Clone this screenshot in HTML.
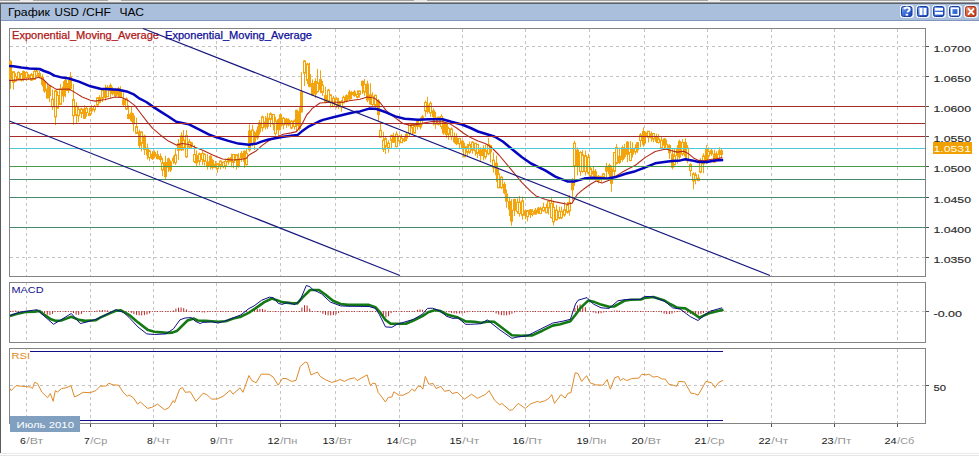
<!DOCTYPE html>
<html><head><meta charset="utf-8"><style>
html,body{margin:0;padding:0;background:#fff;width:979px;height:456px;overflow:hidden}
svg{display:block}
</style></head><body>
<svg width="979" height="456" viewBox="0 0 979 456">
<rect x="0" y="0" width="979" height="1" fill="#a4a4a4"/>
<rect x="20" y="0" width="13" height="1" fill="#e6e6e6"/>
<rect x="108" y="0" width="13" height="1" fill="#e6e6e6"/>
<rect x="414" y="0" width="13" height="1" fill="#e6e6e6"/>
<rect x="708" y="0" width="12" height="1" fill="#e6e6e6"/>
<rect x="975" y="0" width="4" height="1" fill="#e6e6e6"/>
<rect x="0" y="1" width="979" height="1" fill="#f2f2f2"/>
<rect x="0" y="2" width="979" height="1" fill="#9a9a9a"/>
<rect x="0" y="3" width="979" height="1" fill="#5a6270"/>
<rect x="0" y="4" width="979" height="16" fill="#a9bfdb"/>
<rect x="0" y="20" width="979" height="1" fill="#8096bd"/>
<rect x="0" y="3" width="1" height="451" fill="#5c5c5c"/>
<rect x="0" y="453" width="979" height="1" fill="#e9e9e9"/>
<rect x="0" y="455" width="979" height="1" fill="#e6e6e6"/>
<line x1="26.5" y1="29" x2="26.5" y2="276" stroke="#c4c4c4" stroke-width="1" stroke-dasharray="3,3"/>
<line x1="26.5" y1="283" x2="26.5" y2="342" stroke="#c4c4c4" stroke-width="1" stroke-dasharray="3,3"/>
<line x1="26.5" y1="349" x2="26.5" y2="423" stroke="#c4c4c4" stroke-width="1" stroke-dasharray="3,3"/>
<line x1="90.5" y1="29" x2="90.5" y2="276" stroke="#c4c4c4" stroke-width="1" stroke-dasharray="3,3"/>
<line x1="90.5" y1="283" x2="90.5" y2="342" stroke="#c4c4c4" stroke-width="1" stroke-dasharray="3,3"/>
<line x1="90.5" y1="349" x2="90.5" y2="423" stroke="#c4c4c4" stroke-width="1" stroke-dasharray="3,3"/>
<line x1="153.5" y1="29" x2="153.5" y2="276" stroke="#c4c4c4" stroke-width="1" stroke-dasharray="3,3"/>
<line x1="153.5" y1="283" x2="153.5" y2="342" stroke="#c4c4c4" stroke-width="1" stroke-dasharray="3,3"/>
<line x1="153.5" y1="349" x2="153.5" y2="423" stroke="#c4c4c4" stroke-width="1" stroke-dasharray="3,3"/>
<line x1="216.5" y1="29" x2="216.5" y2="276" stroke="#c4c4c4" stroke-width="1" stroke-dasharray="3,3"/>
<line x1="216.5" y1="283" x2="216.5" y2="342" stroke="#c4c4c4" stroke-width="1" stroke-dasharray="3,3"/>
<line x1="216.5" y1="349" x2="216.5" y2="423" stroke="#c4c4c4" stroke-width="1" stroke-dasharray="3,3"/>
<line x1="280.5" y1="29" x2="280.5" y2="276" stroke="#c4c4c4" stroke-width="1" stroke-dasharray="3,3"/>
<line x1="280.5" y1="283" x2="280.5" y2="342" stroke="#c4c4c4" stroke-width="1" stroke-dasharray="3,3"/>
<line x1="280.5" y1="349" x2="280.5" y2="423" stroke="#c4c4c4" stroke-width="1" stroke-dasharray="3,3"/>
<line x1="335.5" y1="29" x2="335.5" y2="276" stroke="#c4c4c4" stroke-width="1" stroke-dasharray="3,3"/>
<line x1="335.5" y1="283" x2="335.5" y2="342" stroke="#c4c4c4" stroke-width="1" stroke-dasharray="3,3"/>
<line x1="335.5" y1="349" x2="335.5" y2="423" stroke="#c4c4c4" stroke-width="1" stroke-dasharray="3,3"/>
<line x1="399.5" y1="29" x2="399.5" y2="276" stroke="#c4c4c4" stroke-width="1" stroke-dasharray="3,3"/>
<line x1="399.5" y1="283" x2="399.5" y2="342" stroke="#c4c4c4" stroke-width="1" stroke-dasharray="3,3"/>
<line x1="399.5" y1="349" x2="399.5" y2="423" stroke="#c4c4c4" stroke-width="1" stroke-dasharray="3,3"/>
<line x1="462.5" y1="29" x2="462.5" y2="276" stroke="#c4c4c4" stroke-width="1" stroke-dasharray="3,3"/>
<line x1="462.5" y1="283" x2="462.5" y2="342" stroke="#c4c4c4" stroke-width="1" stroke-dasharray="3,3"/>
<line x1="462.5" y1="349" x2="462.5" y2="423" stroke="#c4c4c4" stroke-width="1" stroke-dasharray="3,3"/>
<line x1="525.5" y1="29" x2="525.5" y2="276" stroke="#c4c4c4" stroke-width="1" stroke-dasharray="3,3"/>
<line x1="525.5" y1="283" x2="525.5" y2="342" stroke="#c4c4c4" stroke-width="1" stroke-dasharray="3,3"/>
<line x1="525.5" y1="349" x2="525.5" y2="423" stroke="#c4c4c4" stroke-width="1" stroke-dasharray="3,3"/>
<line x1="589.5" y1="29" x2="589.5" y2="276" stroke="#c4c4c4" stroke-width="1" stroke-dasharray="3,3"/>
<line x1="589.5" y1="283" x2="589.5" y2="342" stroke="#c4c4c4" stroke-width="1" stroke-dasharray="3,3"/>
<line x1="589.5" y1="349" x2="589.5" y2="423" stroke="#c4c4c4" stroke-width="1" stroke-dasharray="3,3"/>
<line x1="644.5" y1="29" x2="644.5" y2="276" stroke="#c4c4c4" stroke-width="1" stroke-dasharray="3,3"/>
<line x1="644.5" y1="283" x2="644.5" y2="342" stroke="#c4c4c4" stroke-width="1" stroke-dasharray="3,3"/>
<line x1="644.5" y1="349" x2="644.5" y2="423" stroke="#c4c4c4" stroke-width="1" stroke-dasharray="3,3"/>
<line x1="707.5" y1="29" x2="707.5" y2="276" stroke="#c4c4c4" stroke-width="1" stroke-dasharray="3,3"/>
<line x1="707.5" y1="283" x2="707.5" y2="342" stroke="#c4c4c4" stroke-width="1" stroke-dasharray="3,3"/>
<line x1="707.5" y1="349" x2="707.5" y2="423" stroke="#c4c4c4" stroke-width="1" stroke-dasharray="3,3"/>
<line x1="771.5" y1="29" x2="771.5" y2="276" stroke="#c4c4c4" stroke-width="1" stroke-dasharray="3,3"/>
<line x1="771.5" y1="283" x2="771.5" y2="342" stroke="#c4c4c4" stroke-width="1" stroke-dasharray="3,3"/>
<line x1="771.5" y1="349" x2="771.5" y2="423" stroke="#c4c4c4" stroke-width="1" stroke-dasharray="3,3"/>
<line x1="834.5" y1="29" x2="834.5" y2="276" stroke="#c4c4c4" stroke-width="1" stroke-dasharray="3,3"/>
<line x1="834.5" y1="283" x2="834.5" y2="342" stroke="#c4c4c4" stroke-width="1" stroke-dasharray="3,3"/>
<line x1="834.5" y1="349" x2="834.5" y2="423" stroke="#c4c4c4" stroke-width="1" stroke-dasharray="3,3"/>
<line x1="897.5" y1="29" x2="897.5" y2="276" stroke="#c4c4c4" stroke-width="1" stroke-dasharray="3,3"/>
<line x1="897.5" y1="283" x2="897.5" y2="342" stroke="#c4c4c4" stroke-width="1" stroke-dasharray="3,3"/>
<line x1="897.5" y1="349" x2="897.5" y2="423" stroke="#c4c4c4" stroke-width="1" stroke-dasharray="3,3"/>
<line x1="10" y1="46.5" x2="925" y2="46.5" stroke="#c4c4c4" stroke-width="1" stroke-dasharray="3,3"/>
<line x1="10" y1="76.5" x2="925" y2="76.5" stroke="#c4c4c4" stroke-width="1" stroke-dasharray="3,3"/>
<line x1="10" y1="106.5" x2="925" y2="106.5" stroke="#c4c4c4" stroke-width="1" stroke-dasharray="3,3"/>
<line x1="10" y1="136.5" x2="925" y2="136.5" stroke="#c4c4c4" stroke-width="1" stroke-dasharray="3,3"/>
<line x1="10" y1="166.5" x2="925" y2="166.5" stroke="#c4c4c4" stroke-width="1" stroke-dasharray="3,3"/>
<line x1="10" y1="197.5" x2="925" y2="197.5" stroke="#c4c4c4" stroke-width="1" stroke-dasharray="3,3"/>
<line x1="10" y1="227.5" x2="925" y2="227.5" stroke="#c4c4c4" stroke-width="1" stroke-dasharray="3,3"/>
<line x1="10" y1="257.5" x2="925" y2="257.5" stroke="#c4c4c4" stroke-width="1" stroke-dasharray="3,3"/>
<line x1="10" y1="311.5" x2="925" y2="311.5" stroke="#c4c4c4" stroke-width="1" stroke-dasharray="3,3"/>
<line x1="10" y1="385.5" x2="925" y2="385.5" stroke="#c4c4c4" stroke-width="1" stroke-dasharray="3,3"/>
<rect x="9.5" y="28.5" width="916" height="248" fill="none" stroke="#848484" stroke-width="1"/>
<rect x="9.5" y="282.5" width="916" height="60" fill="none" stroke="#848484" stroke-width="1"/>
<rect x="9.5" y="348.5" width="916" height="75" fill="none" stroke="#848484" stroke-width="1"/>
<rect x="926" y="46" width="3" height="1" fill="#505050"/>
<rect x="926" y="76" width="3" height="1" fill="#505050"/>
<rect x="926" y="106" width="3" height="1" fill="#505050"/>
<rect x="926" y="136" width="3" height="1" fill="#505050"/>
<rect x="926" y="166" width="3" height="1" fill="#505050"/>
<rect x="926" y="197" width="3" height="1" fill="#505050"/>
<rect x="926" y="227" width="3" height="1" fill="#505050"/>
<rect x="926" y="257" width="3" height="1" fill="#505050"/>
<rect x="926" y="311" width="3" height="1" fill="#505050"/>
<rect x="926" y="385" width="3" height="1" fill="#505050"/>
<rect x="26" y="424" width="1" height="3" fill="#505050"/>
<rect x="90" y="424" width="1" height="3" fill="#505050"/>
<rect x="153" y="424" width="1" height="3" fill="#505050"/>
<rect x="216" y="424" width="1" height="3" fill="#505050"/>
<rect x="280" y="424" width="1" height="3" fill="#505050"/>
<rect x="335" y="424" width="1" height="3" fill="#505050"/>
<rect x="399" y="424" width="1" height="3" fill="#505050"/>
<rect x="462" y="424" width="1" height="3" fill="#505050"/>
<rect x="525" y="424" width="1" height="3" fill="#505050"/>
<rect x="589" y="424" width="1" height="3" fill="#505050"/>
<rect x="644" y="424" width="1" height="3" fill="#505050"/>
<rect x="707" y="424" width="1" height="3" fill="#505050"/>
<rect x="771" y="424" width="1" height="3" fill="#505050"/>
<rect x="834" y="424" width="1" height="3" fill="#505050"/>
<rect x="897" y="424" width="1" height="3" fill="#505050"/>
<line x1="10.50" y1="60.2" x2="10.50" y2="88.9" stroke="#f3a30c" stroke-width="1"/>
<rect x="9.00" y="61.0" width="3" height="18.4" fill="#f3a30c"/>
<line x1="13.50" y1="71.4" x2="13.50" y2="89.6" stroke="#f3a30c" stroke-width="1"/>
<rect x="12.50" y="71.7" width="2" height="10.5" fill="#fffbe0" stroke="#f3a30c" stroke-width="1"/>
<line x1="15.50" y1="73.2" x2="15.50" y2="81.8" stroke="#f3a30c" stroke-width="1"/>
<rect x="14.50" y="76.5" width="2" height="4.6" fill="#fffbe0" stroke="#f3a30c" stroke-width="1"/>
<line x1="18.50" y1="71.3" x2="18.50" y2="79.9" stroke="#f3a30c" stroke-width="1"/>
<rect x="17.50" y="72.4" width="2" height="6.7" fill="#fffbe0" stroke="#f3a30c" stroke-width="1"/>
<line x1="21.50" y1="73.1" x2="21.50" y2="81.5" stroke="#f3a30c" stroke-width="1"/>
<rect x="20.50" y="73.8" width="2" height="6.2" fill="#fffbe0" stroke="#f3a30c" stroke-width="1"/>
<line x1="23.50" y1="70.4" x2="23.50" y2="81.4" stroke="#f3a30c" stroke-width="1"/>
<rect x="22.00" y="71.0" width="3" height="7.9" fill="#f3a30c"/>
<line x1="26.50" y1="72.2" x2="26.50" y2="81.1" stroke="#f3a30c" stroke-width="1"/>
<rect x="25.50" y="72.4" width="2" height="5.3" fill="#fffbe0" stroke="#f3a30c" stroke-width="1"/>
<line x1="28.50" y1="73.8" x2="28.50" y2="80.0" stroke="#f3a30c" stroke-width="1"/>
<rect x="27.00" y="74.7" width="3" height="3.4" fill="#f3a30c"/>
<line x1="31.50" y1="72.9" x2="31.50" y2="80.9" stroke="#f3a30c" stroke-width="1"/>
<rect x="30.50" y="74.6" width="2" height="5.6" fill="#fffbe0" stroke="#f3a30c" stroke-width="1"/>
<line x1="34.50" y1="69.5" x2="34.50" y2="80.1" stroke="#f3a30c" stroke-width="1"/>
<rect x="33.50" y="71.5" width="2" height="7.9" fill="#fffbe0" stroke="#f3a30c" stroke-width="1"/>
<line x1="36.50" y1="67.5" x2="36.50" y2="77.3" stroke="#f3a30c" stroke-width="1"/>
<rect x="35.50" y="70.9" width="2" height="5.2" fill="#fffbe0" stroke="#f3a30c" stroke-width="1"/>
<line x1="39.50" y1="70.9" x2="39.50" y2="78.2" stroke="#f3a30c" stroke-width="1"/>
<rect x="38.00" y="72.8" width="3" height="4.8" fill="#f3a30c"/>
<line x1="42.50" y1="74.4" x2="42.50" y2="86.7" stroke="#f3a30c" stroke-width="1"/>
<rect x="41.00" y="76.8" width="3" height="8.2" fill="#f3a30c"/>
<line x1="44.50" y1="80.6" x2="44.50" y2="92.9" stroke="#f3a30c" stroke-width="1"/>
<rect x="43.00" y="81.9" width="3" height="9.6" fill="#f3a30c"/>
<line x1="47.50" y1="83.1" x2="47.50" y2="98.5" stroke="#f3a30c" stroke-width="1"/>
<rect x="46.00" y="88.6" width="3" height="9.9" fill="#f3a30c"/>
<line x1="49.50" y1="85.5" x2="49.50" y2="102.0" stroke="#f3a30c" stroke-width="1"/>
<rect x="48.00" y="85.6" width="3" height="10.8" fill="#f3a30c"/>
<line x1="52.50" y1="89.5" x2="52.50" y2="109.8" stroke="#f3a30c" stroke-width="1"/>
<rect x="51.50" y="99.2" width="2" height="7.6" fill="#fffbe0" stroke="#f3a30c" stroke-width="1"/>
<line x1="55.50" y1="90.0" x2="55.50" y2="125.2" stroke="#f3a30c" stroke-width="1"/>
<rect x="54.50" y="90.7" width="2" height="26.2" fill="#fffbe0" stroke="#f3a30c" stroke-width="1"/>
<line x1="57.50" y1="91.2" x2="57.50" y2="108.8" stroke="#f3a30c" stroke-width="1"/>
<rect x="56.50" y="95.5" width="2" height="12.7" fill="#fffbe0" stroke="#f3a30c" stroke-width="1"/>
<line x1="60.50" y1="84.1" x2="60.50" y2="104.6" stroke="#f3a30c" stroke-width="1"/>
<rect x="59.50" y="89.1" width="2" height="15.3" fill="#fffbe0" stroke="#f3a30c" stroke-width="1"/>
<line x1="63.50" y1="81.1" x2="63.50" y2="102.2" stroke="#f3a30c" stroke-width="1"/>
<rect x="62.00" y="86.7" width="3" height="9.6" fill="#f3a30c"/>
<line x1="65.50" y1="76.5" x2="65.50" y2="97.1" stroke="#f3a30c" stroke-width="1"/>
<rect x="64.00" y="80.0" width="3" height="11.1" fill="#f3a30c"/>
<line x1="68.50" y1="79.5" x2="68.50" y2="93.2" stroke="#f3a30c" stroke-width="1"/>
<rect x="67.00" y="83.0" width="3" height="8.0" fill="#f3a30c"/>
<line x1="70.50" y1="71.9" x2="70.50" y2="89.6" stroke="#f3a30c" stroke-width="1"/>
<rect x="69.00" y="76.5" width="3" height="12.4" fill="#f3a30c"/>
<line x1="73.50" y1="83.9" x2="73.50" y2="124.8" stroke="#f3a30c" stroke-width="1"/>
<rect x="72.50" y="99.6" width="2" height="16.2" fill="#fffbe0" stroke="#f3a30c" stroke-width="1"/>
<line x1="76.50" y1="102.1" x2="76.50" y2="123.4" stroke="#f3a30c" stroke-width="1"/>
<rect x="75.50" y="106.3" width="2" height="9.0" fill="#fffbe0" stroke="#f3a30c" stroke-width="1"/>
<line x1="78.50" y1="105.8" x2="78.50" y2="121.9" stroke="#f3a30c" stroke-width="1"/>
<rect x="77.50" y="109.3" width="2" height="6.4" fill="#fffbe0" stroke="#f3a30c" stroke-width="1"/>
<line x1="81.50" y1="107.4" x2="81.50" y2="118.1" stroke="#f3a30c" stroke-width="1"/>
<rect x="80.50" y="109.0" width="2" height="4.4" fill="#fffbe0" stroke="#f3a30c" stroke-width="1"/>
<line x1="84.50" y1="105.1" x2="84.50" y2="118.8" stroke="#f3a30c" stroke-width="1"/>
<rect x="83.00" y="108.7" width="3" height="10.1" fill="#f3a30c"/>
<line x1="86.50" y1="106.3" x2="86.50" y2="116.7" stroke="#f3a30c" stroke-width="1"/>
<rect x="85.50" y="108.4" width="2" height="4.1" fill="#fffbe0" stroke="#f3a30c" stroke-width="1"/>
<line x1="89.50" y1="107.7" x2="89.50" y2="116.1" stroke="#f3a30c" stroke-width="1"/>
<rect x="88.00" y="112.8" width="3" height="3.1" fill="#f3a30c"/>
<line x1="91.50" y1="104.9" x2="91.50" y2="114.4" stroke="#f3a30c" stroke-width="1"/>
<rect x="90.00" y="108.1" width="3" height="3.4" fill="#f3a30c"/>
<line x1="94.50" y1="104.8" x2="94.50" y2="112.4" stroke="#f3a30c" stroke-width="1"/>
<rect x="93.50" y="106.3" width="2" height="3.5" fill="#fffbe0" stroke="#f3a30c" stroke-width="1"/>
<line x1="97.50" y1="97.0" x2="97.50" y2="107.2" stroke="#f3a30c" stroke-width="1"/>
<rect x="96.50" y="98.0" width="2" height="7.1" fill="#fffbe0" stroke="#f3a30c" stroke-width="1"/>
<line x1="99.50" y1="95.3" x2="99.50" y2="103.4" stroke="#f3a30c" stroke-width="1"/>
<rect x="98.00" y="97.0" width="3" height="5.9" fill="#f3a30c"/>
<line x1="102.50" y1="88.4" x2="102.50" y2="101.9" stroke="#f3a30c" stroke-width="1"/>
<rect x="101.50" y="90.4" width="2" height="7.9" fill="#fffbe0" stroke="#f3a30c" stroke-width="1"/>
<line x1="105.50" y1="84.6" x2="105.50" y2="100.6" stroke="#f3a30c" stroke-width="1"/>
<rect x="104.00" y="90.5" width="3" height="7.5" fill="#f3a30c"/>
<line x1="107.50" y1="85.1" x2="107.50" y2="96.8" stroke="#f3a30c" stroke-width="1"/>
<rect x="106.50" y="87.4" width="2" height="9.3" fill="#fffbe0" stroke="#f3a30c" stroke-width="1"/>
<line x1="110.50" y1="83.3" x2="110.50" y2="97.8" stroke="#f3a30c" stroke-width="1"/>
<rect x="109.00" y="84.9" width="3" height="6.4" fill="#f3a30c"/>
<line x1="112.50" y1="86.8" x2="112.50" y2="95.4" stroke="#f3a30c" stroke-width="1"/>
<rect x="111.00" y="89.2" width="3" height="4.9" fill="#f3a30c"/>
<line x1="115.50" y1="87.8" x2="115.50" y2="96.7" stroke="#f3a30c" stroke-width="1"/>
<rect x="114.00" y="89.5" width="3" height="6.7" fill="#f3a30c"/>
<line x1="118.50" y1="86.9" x2="118.50" y2="97.6" stroke="#f3a30c" stroke-width="1"/>
<rect x="117.00" y="88.0" width="3" height="7.5" fill="#f3a30c"/>
<line x1="120.50" y1="86.2" x2="120.50" y2="97.6" stroke="#f3a30c" stroke-width="1"/>
<rect x="119.00" y="91.3" width="3" height="6.0" fill="#f3a30c"/>
<line x1="123.50" y1="92.5" x2="123.50" y2="105.8" stroke="#f3a30c" stroke-width="1"/>
<rect x="122.00" y="99.5" width="3" height="5.5" fill="#f3a30c"/>
<line x1="126.50" y1="97.2" x2="126.50" y2="110.0" stroke="#f3a30c" stroke-width="1"/>
<rect x="125.50" y="98.9" width="2" height="10.2" fill="#fffbe0" stroke="#f3a30c" stroke-width="1"/>
<line x1="128.50" y1="105.3" x2="128.50" y2="119.2" stroke="#f3a30c" stroke-width="1"/>
<rect x="127.00" y="114.0" width="3" height="5.0" fill="#f3a30c"/>
<line x1="131.50" y1="106.8" x2="131.50" y2="121.8" stroke="#f3a30c" stroke-width="1"/>
<rect x="130.00" y="112.7" width="3" height="8.2" fill="#f3a30c"/>
<line x1="133.50" y1="113.2" x2="133.50" y2="131.5" stroke="#f3a30c" stroke-width="1"/>
<rect x="132.00" y="115.5" width="3" height="8.8" fill="#f3a30c"/>
<line x1="136.50" y1="117.7" x2="136.50" y2="134.1" stroke="#f3a30c" stroke-width="1"/>
<rect x="135.50" y="126.6" width="2" height="6.7" fill="#fffbe0" stroke="#f3a30c" stroke-width="1"/>
<line x1="139.50" y1="129.7" x2="139.50" y2="148.5" stroke="#f3a30c" stroke-width="1"/>
<rect x="138.00" y="131.6" width="3" height="14.2" fill="#f3a30c"/>
<line x1="141.50" y1="131.8" x2="141.50" y2="151.4" stroke="#f3a30c" stroke-width="1"/>
<rect x="140.50" y="131.9" width="2" height="11.5" fill="#fffbe0" stroke="#f3a30c" stroke-width="1"/>
<line x1="144.50" y1="134.7" x2="144.50" y2="154.9" stroke="#f3a30c" stroke-width="1"/>
<rect x="143.00" y="135.7" width="3" height="14.3" fill="#f3a30c"/>
<line x1="147.50" y1="143.6" x2="147.50" y2="159.4" stroke="#f3a30c" stroke-width="1"/>
<rect x="146.00" y="147.7" width="3" height="7.8" fill="#f3a30c"/>
<line x1="149.50" y1="149.9" x2="149.50" y2="160.9" stroke="#f3a30c" stroke-width="1"/>
<rect x="148.50" y="151.0" width="2" height="6.7" fill="#fffbe0" stroke="#f3a30c" stroke-width="1"/>
<line x1="152.50" y1="151.1" x2="152.50" y2="160.0" stroke="#f3a30c" stroke-width="1"/>
<rect x="151.00" y="153.8" width="3" height="5.4" fill="#f3a30c"/>
<line x1="154.50" y1="150.4" x2="154.50" y2="158.4" stroke="#f3a30c" stroke-width="1"/>
<rect x="153.00" y="152.1" width="3" height="4.6" fill="#f3a30c"/>
<line x1="157.50" y1="150.6" x2="157.50" y2="159.4" stroke="#f3a30c" stroke-width="1"/>
<rect x="156.00" y="154.2" width="3" height="5.0" fill="#f3a30c"/>
<line x1="160.50" y1="153.4" x2="160.50" y2="162.2" stroke="#f3a30c" stroke-width="1"/>
<rect x="159.00" y="156.0" width="3" height="4.1" fill="#f3a30c"/>
<line x1="162.50" y1="157.9" x2="162.50" y2="176.2" stroke="#f3a30c" stroke-width="1"/>
<rect x="161.50" y="162.7" width="2" height="7.4" fill="#fffbe0" stroke="#f3a30c" stroke-width="1"/>
<line x1="165.50" y1="155.6" x2="165.50" y2="178.9" stroke="#f3a30c" stroke-width="1"/>
<rect x="164.00" y="162.0" width="3" height="15.1" fill="#f3a30c"/>
<line x1="168.50" y1="157.7" x2="168.50" y2="172.0" stroke="#f3a30c" stroke-width="1"/>
<rect x="167.00" y="158.4" width="3" height="9.3" fill="#f3a30c"/>
<line x1="170.50" y1="160.4" x2="170.50" y2="172.1" stroke="#f3a30c" stroke-width="1"/>
<rect x="169.00" y="161.5" width="3" height="9.0" fill="#f3a30c"/>
<line x1="173.50" y1="155.6" x2="173.50" y2="164.1" stroke="#f3a30c" stroke-width="1"/>
<rect x="172.00" y="157.8" width="3" height="3.6" fill="#f3a30c"/>
<line x1="175.50" y1="148.9" x2="175.50" y2="164.9" stroke="#f3a30c" stroke-width="1"/>
<rect x="174.50" y="154.8" width="2" height="7.9" fill="#fffbe0" stroke="#f3a30c" stroke-width="1"/>
<line x1="178.50" y1="138.9" x2="178.50" y2="159.9" stroke="#f3a30c" stroke-width="1"/>
<rect x="177.00" y="143.3" width="3" height="7.5" fill="#f3a30c"/>
<line x1="181.50" y1="132.3" x2="181.50" y2="151.0" stroke="#f3a30c" stroke-width="1"/>
<rect x="180.00" y="135.4" width="3" height="14.8" fill="#f3a30c"/>
<line x1="183.50" y1="130.1" x2="183.50" y2="150.7" stroke="#f3a30c" stroke-width="1"/>
<rect x="182.50" y="140.2" width="2" height="7.6" fill="#fffbe0" stroke="#f3a30c" stroke-width="1"/>
<line x1="186.50" y1="130.1" x2="186.50" y2="158.0" stroke="#f3a30c" stroke-width="1"/>
<rect x="185.50" y="135.6" width="2" height="21.2" fill="#fffbe0" stroke="#f3a30c" stroke-width="1"/>
<line x1="189.50" y1="139.3" x2="189.50" y2="148.2" stroke="#f3a30c" stroke-width="1"/>
<rect x="188.50" y="141.8" width="2" height="5.4" fill="#fffbe0" stroke="#f3a30c" stroke-width="1"/>
<line x1="191.50" y1="142.1" x2="191.50" y2="148.7" stroke="#f3a30c" stroke-width="1"/>
<rect x="190.00" y="142.3" width="3" height="3.6" fill="#f3a30c"/>
<line x1="194.50" y1="145.0" x2="194.50" y2="163.1" stroke="#f3a30c" stroke-width="1"/>
<rect x="193.50" y="154.5" width="2" height="7.0" fill="#fffbe0" stroke="#f3a30c" stroke-width="1"/>
<line x1="196.50" y1="150.5" x2="196.50" y2="167.1" stroke="#f3a30c" stroke-width="1"/>
<rect x="195.00" y="155.0" width="3" height="8.4" fill="#f3a30c"/>
<line x1="199.50" y1="152.6" x2="199.50" y2="165.4" stroke="#f3a30c" stroke-width="1"/>
<rect x="198.50" y="153.9" width="2" height="7.5" fill="#fffbe0" stroke="#f3a30c" stroke-width="1"/>
<line x1="202.50" y1="151.0" x2="202.50" y2="165.1" stroke="#f3a30c" stroke-width="1"/>
<rect x="201.50" y="153.4" width="2" height="6.2" fill="#fffbe0" stroke="#f3a30c" stroke-width="1"/>
<line x1="204.50" y1="153.3" x2="204.50" y2="165.6" stroke="#f3a30c" stroke-width="1"/>
<rect x="203.50" y="154.3" width="2" height="7.1" fill="#fffbe0" stroke="#f3a30c" stroke-width="1"/>
<line x1="207.50" y1="154.2" x2="207.50" y2="169.6" stroke="#f3a30c" stroke-width="1"/>
<rect x="206.00" y="161.4" width="3" height="5.5" fill="#f3a30c"/>
<line x1="210.50" y1="155.3" x2="210.50" y2="169.4" stroke="#f3a30c" stroke-width="1"/>
<rect x="209.00" y="155.7" width="3" height="10.9" fill="#f3a30c"/>
<line x1="212.50" y1="158.8" x2="212.50" y2="169.6" stroke="#f3a30c" stroke-width="1"/>
<rect x="211.00" y="160.0" width="3" height="7.8" fill="#f3a30c"/>
<line x1="215.50" y1="160.8" x2="215.50" y2="168.3" stroke="#f3a30c" stroke-width="1"/>
<rect x="214.00" y="163.9" width="3" height="3.8" fill="#f3a30c"/>
<line x1="217.50" y1="163.4" x2="217.50" y2="173.0" stroke="#f3a30c" stroke-width="1"/>
<rect x="216.50" y="163.7" width="2" height="4.9" fill="#fffbe0" stroke="#f3a30c" stroke-width="1"/>
<line x1="220.50" y1="160.3" x2="220.50" y2="169.6" stroke="#f3a30c" stroke-width="1"/>
<rect x="219.50" y="161.1" width="2" height="4.3" fill="#fffbe0" stroke="#f3a30c" stroke-width="1"/>
<line x1="223.50" y1="161.6" x2="223.50" y2="168.3" stroke="#f3a30c" stroke-width="1"/>
<rect x="222.50" y="162.2" width="2" height="4.4" fill="#fffbe0" stroke="#f3a30c" stroke-width="1"/>
<line x1="225.50" y1="158.8" x2="225.50" y2="169.2" stroke="#f3a30c" stroke-width="1"/>
<rect x="224.50" y="161.5" width="2" height="4.4" fill="#fffbe0" stroke="#f3a30c" stroke-width="1"/>
<line x1="228.50" y1="157.3" x2="228.50" y2="164.7" stroke="#f3a30c" stroke-width="1"/>
<rect x="227.00" y="158.0" width="3" height="4.4" fill="#f3a30c"/>
<line x1="231.50" y1="153.6" x2="231.50" y2="167.3" stroke="#f3a30c" stroke-width="1"/>
<rect x="230.00" y="157.0" width="3" height="4.8" fill="#f3a30c"/>
<line x1="233.50" y1="154.5" x2="233.50" y2="168.2" stroke="#f3a30c" stroke-width="1"/>
<rect x="232.50" y="154.5" width="2" height="7.9" fill="#fffbe0" stroke="#f3a30c" stroke-width="1"/>
<line x1="236.50" y1="154.5" x2="236.50" y2="169.6" stroke="#f3a30c" stroke-width="1"/>
<rect x="235.50" y="154.7" width="2" height="5.6" fill="#fffbe0" stroke="#f3a30c" stroke-width="1"/>
<line x1="238.50" y1="153.4" x2="238.50" y2="167.6" stroke="#f3a30c" stroke-width="1"/>
<rect x="237.00" y="157.8" width="3" height="8.4" fill="#f3a30c"/>
<line x1="241.50" y1="151.2" x2="241.50" y2="161.9" stroke="#f3a30c" stroke-width="1"/>
<rect x="240.00" y="152.9" width="3" height="5.6" fill="#f3a30c"/>
<line x1="244.50" y1="150.4" x2="244.50" y2="167.8" stroke="#f3a30c" stroke-width="1"/>
<rect x="243.00" y="150.7" width="3" height="11.1" fill="#f3a30c"/>
<line x1="246.50" y1="149.0" x2="246.50" y2="165.6" stroke="#f3a30c" stroke-width="1"/>
<rect x="245.50" y="153.3" width="2" height="11.3" fill="#fffbe0" stroke="#f3a30c" stroke-width="1"/>
<line x1="249.50" y1="124.4" x2="249.50" y2="151.8" stroke="#f3a30c" stroke-width="1"/>
<rect x="248.00" y="130.4" width="3" height="19.9" fill="#f3a30c"/>
<line x1="252.50" y1="124.9" x2="252.50" y2="146.3" stroke="#f3a30c" stroke-width="1"/>
<rect x="251.50" y="130.0" width="2" height="14.1" fill="#fffbe0" stroke="#f3a30c" stroke-width="1"/>
<line x1="254.50" y1="131.1" x2="254.50" y2="150.0" stroke="#f3a30c" stroke-width="1"/>
<rect x="253.00" y="132.1" width="3" height="9.7" fill="#f3a30c"/>
<line x1="257.50" y1="126.4" x2="257.50" y2="139.8" stroke="#f3a30c" stroke-width="1"/>
<rect x="256.00" y="129.7" width="3" height="8.5" fill="#f3a30c"/>
<line x1="259.50" y1="120.1" x2="259.50" y2="134.7" stroke="#f3a30c" stroke-width="1"/>
<rect x="258.00" y="122.4" width="3" height="10.1" fill="#f3a30c"/>
<line x1="262.50" y1="115.6" x2="262.50" y2="131.6" stroke="#f3a30c" stroke-width="1"/>
<rect x="261.50" y="116.9" width="2" height="10.9" fill="#fffbe0" stroke="#f3a30c" stroke-width="1"/>
<line x1="265.50" y1="116.0" x2="265.50" y2="129.5" stroke="#f3a30c" stroke-width="1"/>
<rect x="264.00" y="121.5" width="3" height="6.0" fill="#f3a30c"/>
<line x1="267.50" y1="112.9" x2="267.50" y2="129.0" stroke="#f3a30c" stroke-width="1"/>
<rect x="266.00" y="117.7" width="3" height="9.1" fill="#f3a30c"/>
<line x1="270.50" y1="112.4" x2="270.50" y2="127.2" stroke="#f3a30c" stroke-width="1"/>
<rect x="269.50" y="113.7" width="2" height="5.7" fill="#fffbe0" stroke="#f3a30c" stroke-width="1"/>
<line x1="273.50" y1="114.3" x2="273.50" y2="130.4" stroke="#f3a30c" stroke-width="1"/>
<rect x="272.50" y="114.4" width="2" height="9.7" fill="#fffbe0" stroke="#f3a30c" stroke-width="1"/>
<line x1="275.50" y1="116.7" x2="275.50" y2="135.7" stroke="#f3a30c" stroke-width="1"/>
<rect x="274.50" y="121.0" width="2" height="12.6" fill="#fffbe0" stroke="#f3a30c" stroke-width="1"/>
<line x1="278.50" y1="118.3" x2="278.50" y2="137.9" stroke="#f3a30c" stroke-width="1"/>
<rect x="277.00" y="119.3" width="3" height="11.0" fill="#f3a30c"/>
<line x1="280.50" y1="114.2" x2="280.50" y2="130.2" stroke="#f3a30c" stroke-width="1"/>
<rect x="279.00" y="114.2" width="3" height="12.3" fill="#f3a30c"/>
<line x1="283.50" y1="116.8" x2="283.50" y2="129.1" stroke="#f3a30c" stroke-width="1"/>
<rect x="282.50" y="118.2" width="2" height="6.8" fill="#fffbe0" stroke="#f3a30c" stroke-width="1"/>
<line x1="286.50" y1="118.1" x2="286.50" y2="127.9" stroke="#f3a30c" stroke-width="1"/>
<rect x="285.00" y="118.6" width="3" height="6.0" fill="#f3a30c"/>
<line x1="288.50" y1="118.3" x2="288.50" y2="126.4" stroke="#f3a30c" stroke-width="1"/>
<rect x="287.00" y="119.5" width="3" height="5.8" fill="#f3a30c"/>
<line x1="291.50" y1="120.2" x2="291.50" y2="129.3" stroke="#f3a30c" stroke-width="1"/>
<rect x="290.50" y="121.2" width="2" height="6.9" fill="#fffbe0" stroke="#f3a30c" stroke-width="1"/>
<line x1="294.50" y1="119.3" x2="294.50" y2="129.7" stroke="#f3a30c" stroke-width="1"/>
<rect x="293.50" y="120.7" width="2" height="5.8" fill="#fffbe0" stroke="#f3a30c" stroke-width="1"/>
<line x1="296.50" y1="109.8" x2="296.50" y2="131.8" stroke="#f3a30c" stroke-width="1"/>
<rect x="295.00" y="109.8" width="3" height="16.0" fill="#f3a30c"/>
<line x1="299.50" y1="107.3" x2="299.50" y2="130.6" stroke="#f3a30c" stroke-width="1"/>
<rect x="298.00" y="111.2" width="3" height="17.8" fill="#f3a30c"/>
<line x1="301.50" y1="72.2" x2="301.50" y2="112.5" stroke="#f3a30c" stroke-width="1"/>
<rect x="300.00" y="91.2" width="3" height="21.2" fill="#f3a30c"/>
<line x1="304.50" y1="60.2" x2="304.50" y2="86.1" stroke="#f3a30c" stroke-width="1"/>
<rect x="303.50" y="60.9" width="2" height="12.3" fill="#fffbe0" stroke="#f3a30c" stroke-width="1"/>
<line x1="307.50" y1="62.8" x2="307.50" y2="84.0" stroke="#f3a30c" stroke-width="1"/>
<rect x="306.50" y="64.0" width="2" height="16.3" fill="#fffbe0" stroke="#f3a30c" stroke-width="1"/>
<line x1="309.50" y1="62.7" x2="309.50" y2="87.3" stroke="#f3a30c" stroke-width="1"/>
<rect x="308.00" y="74.0" width="3" height="12.8" fill="#f3a30c"/>
<line x1="312.50" y1="79.4" x2="312.50" y2="95.7" stroke="#f3a30c" stroke-width="1"/>
<rect x="311.00" y="83.0" width="3" height="12.4" fill="#f3a30c"/>
<line x1="315.50" y1="78.3" x2="315.50" y2="98.0" stroke="#f3a30c" stroke-width="1"/>
<rect x="314.00" y="81.1" width="3" height="13.4" fill="#f3a30c"/>
<line x1="317.50" y1="68.8" x2="317.50" y2="92.7" stroke="#f3a30c" stroke-width="1"/>
<rect x="316.50" y="82.7" width="2" height="8.9" fill="#fffbe0" stroke="#f3a30c" stroke-width="1"/>
<line x1="320.50" y1="70.3" x2="320.50" y2="93.3" stroke="#f3a30c" stroke-width="1"/>
<rect x="319.00" y="79.1" width="3" height="11.1" fill="#f3a30c"/>
<line x1="322.50" y1="81.0" x2="322.50" y2="95.8" stroke="#f3a30c" stroke-width="1"/>
<rect x="321.50" y="85.2" width="2" height="7.2" fill="#fffbe0" stroke="#f3a30c" stroke-width="1"/>
<line x1="325.50" y1="86.7" x2="325.50" y2="103.4" stroke="#f3a30c" stroke-width="1"/>
<rect x="324.00" y="95.1" width="3" height="7.4" fill="#f3a30c"/>
<line x1="328.50" y1="88.8" x2="328.50" y2="101.9" stroke="#f3a30c" stroke-width="1"/>
<rect x="327.50" y="90.0" width="2" height="10.5" fill="#fffbe0" stroke="#f3a30c" stroke-width="1"/>
<line x1="330.50" y1="94.2" x2="330.50" y2="107.6" stroke="#f3a30c" stroke-width="1"/>
<rect x="329.50" y="94.8" width="2" height="6.8" fill="#fffbe0" stroke="#f3a30c" stroke-width="1"/>
<line x1="333.50" y1="95.9" x2="333.50" y2="107.3" stroke="#f3a30c" stroke-width="1"/>
<rect x="332.50" y="98.1" width="2" height="8.5" fill="#fffbe0" stroke="#f3a30c" stroke-width="1"/>
<line x1="336.50" y1="96.8" x2="336.50" y2="108.3" stroke="#f3a30c" stroke-width="1"/>
<rect x="335.50" y="98.7" width="2" height="6.0" fill="#fffbe0" stroke="#f3a30c" stroke-width="1"/>
<line x1="338.50" y1="97.7" x2="338.50" y2="109.0" stroke="#f3a30c" stroke-width="1"/>
<rect x="337.00" y="101.1" width="3" height="4.6" fill="#f3a30c"/>
<line x1="341.50" y1="100.0" x2="341.50" y2="111.8" stroke="#f3a30c" stroke-width="1"/>
<rect x="340.50" y="101.6" width="2" height="5.6" fill="#fffbe0" stroke="#f3a30c" stroke-width="1"/>
<line x1="343.50" y1="95.6" x2="343.50" y2="103.1" stroke="#f3a30c" stroke-width="1"/>
<rect x="342.50" y="97.3" width="2" height="5.5" fill="#fffbe0" stroke="#f3a30c" stroke-width="1"/>
<line x1="346.50" y1="94.3" x2="346.50" y2="102.4" stroke="#f3a30c" stroke-width="1"/>
<rect x="345.00" y="95.2" width="3" height="6.2" fill="#f3a30c"/>
<line x1="349.50" y1="89.9" x2="349.50" y2="99.9" stroke="#f3a30c" stroke-width="1"/>
<rect x="348.00" y="91.8" width="3" height="7.7" fill="#f3a30c"/>
<line x1="351.50" y1="91.1" x2="351.50" y2="99.2" stroke="#f3a30c" stroke-width="1"/>
<rect x="350.00" y="91.9" width="3" height="3.2" fill="#f3a30c"/>
<line x1="354.50" y1="89.9" x2="354.50" y2="96.9" stroke="#f3a30c" stroke-width="1"/>
<rect x="353.00" y="91.4" width="3" height="4.7" fill="#f3a30c"/>
<line x1="357.50" y1="90.3" x2="357.50" y2="98.5" stroke="#f3a30c" stroke-width="1"/>
<rect x="356.50" y="94.4" width="2" height="3.0" fill="#fffbe0" stroke="#f3a30c" stroke-width="1"/>
<line x1="359.50" y1="90.5" x2="359.50" y2="97.6" stroke="#f3a30c" stroke-width="1"/>
<rect x="358.50" y="90.9" width="2" height="3.5" fill="#fffbe0" stroke="#f3a30c" stroke-width="1"/>
<line x1="362.50" y1="80.4" x2="362.50" y2="93.9" stroke="#f3a30c" stroke-width="1"/>
<rect x="361.00" y="80.9" width="3" height="5.4" fill="#f3a30c"/>
<line x1="364.50" y1="78.9" x2="364.50" y2="95.8" stroke="#f3a30c" stroke-width="1"/>
<rect x="363.50" y="84.5" width="2" height="7.6" fill="#fffbe0" stroke="#f3a30c" stroke-width="1"/>
<line x1="367.50" y1="80.6" x2="367.50" y2="102.2" stroke="#f3a30c" stroke-width="1"/>
<rect x="366.00" y="83.6" width="3" height="16.9" fill="#f3a30c"/>
<line x1="370.50" y1="83.2" x2="370.50" y2="104.8" stroke="#f3a30c" stroke-width="1"/>
<rect x="369.00" y="94.3" width="3" height="10.0" fill="#f3a30c"/>
<line x1="372.50" y1="92.3" x2="372.50" y2="106.5" stroke="#f3a30c" stroke-width="1"/>
<rect x="371.50" y="96.4" width="2" height="8.1" fill="#fffbe0" stroke="#f3a30c" stroke-width="1"/>
<line x1="375.50" y1="94.6" x2="375.50" y2="107.8" stroke="#f3a30c" stroke-width="1"/>
<rect x="374.50" y="95.3" width="2" height="10.1" fill="#fffbe0" stroke="#f3a30c" stroke-width="1"/>
<line x1="378.50" y1="99.0" x2="378.50" y2="121.2" stroke="#f3a30c" stroke-width="1"/>
<rect x="377.00" y="100.5" width="3" height="14.6" fill="#f3a30c"/>
<line x1="380.50" y1="122.1" x2="380.50" y2="137.4" stroke="#f3a30c" stroke-width="1"/>
<rect x="379.50" y="130.4" width="2" height="6.8" fill="#fffbe0" stroke="#f3a30c" stroke-width="1"/>
<line x1="383.50" y1="131.8" x2="383.50" y2="152.0" stroke="#f3a30c" stroke-width="1"/>
<rect x="382.50" y="140.3" width="2" height="9.1" fill="#fffbe0" stroke="#f3a30c" stroke-width="1"/>
<line x1="385.50" y1="136.4" x2="385.50" y2="154.0" stroke="#f3a30c" stroke-width="1"/>
<rect x="384.50" y="138.6" width="2" height="7.7" fill="#fffbe0" stroke="#f3a30c" stroke-width="1"/>
<line x1="388.50" y1="140.3" x2="388.50" y2="152.7" stroke="#f3a30c" stroke-width="1"/>
<rect x="387.50" y="143.1" width="2" height="5.2" fill="#fffbe0" stroke="#f3a30c" stroke-width="1"/>
<line x1="391.50" y1="134.9" x2="391.50" y2="147.9" stroke="#f3a30c" stroke-width="1"/>
<rect x="390.50" y="135.4" width="2" height="4.9" fill="#fffbe0" stroke="#f3a30c" stroke-width="1"/>
<line x1="393.50" y1="132.7" x2="393.50" y2="142.8" stroke="#f3a30c" stroke-width="1"/>
<rect x="392.00" y="135.9" width="3" height="6.9" fill="#f3a30c"/>
<line x1="396.50" y1="131.3" x2="396.50" y2="147.5" stroke="#f3a30c" stroke-width="1"/>
<rect x="395.50" y="134.1" width="2" height="12.5" fill="#fffbe0" stroke="#f3a30c" stroke-width="1"/>
<line x1="399.50" y1="134.6" x2="399.50" y2="143.8" stroke="#f3a30c" stroke-width="1"/>
<rect x="398.50" y="136.1" width="2" height="4.8" fill="#fffbe0" stroke="#f3a30c" stroke-width="1"/>
<line x1="401.50" y1="134.1" x2="401.50" y2="142.9" stroke="#f3a30c" stroke-width="1"/>
<rect x="400.50" y="138.2" width="2" height="4.5" fill="#fffbe0" stroke="#f3a30c" stroke-width="1"/>
<line x1="404.50" y1="136.0" x2="404.50" y2="141.9" stroke="#f3a30c" stroke-width="1"/>
<rect x="403.00" y="138.4" width="3" height="3.0" fill="#f3a30c"/>
<line x1="406.50" y1="132.4" x2="406.50" y2="141.0" stroke="#f3a30c" stroke-width="1"/>
<rect x="405.00" y="133.8" width="3" height="4.9" fill="#f3a30c"/>
<line x1="409.50" y1="123.2" x2="409.50" y2="136.8" stroke="#f3a30c" stroke-width="1"/>
<rect x="408.50" y="123.3" width="2" height="10.2" fill="#fffbe0" stroke="#f3a30c" stroke-width="1"/>
<line x1="412.50" y1="123.9" x2="412.50" y2="134.1" stroke="#f3a30c" stroke-width="1"/>
<rect x="411.50" y="124.1" width="2" height="3.8" fill="#fffbe0" stroke="#f3a30c" stroke-width="1"/>
<line x1="414.50" y1="123.0" x2="414.50" y2="133.3" stroke="#f3a30c" stroke-width="1"/>
<rect x="413.50" y="125.9" width="2" height="7.1" fill="#fffbe0" stroke="#f3a30c" stroke-width="1"/>
<line x1="417.50" y1="119.9" x2="417.50" y2="129.7" stroke="#f3a30c" stroke-width="1"/>
<rect x="416.00" y="120.9" width="3" height="6.1" fill="#f3a30c"/>
<line x1="420.50" y1="117.5" x2="420.50" y2="129.4" stroke="#f3a30c" stroke-width="1"/>
<rect x="419.00" y="123.3" width="3" height="4.2" fill="#f3a30c"/>
<line x1="422.50" y1="114.8" x2="422.50" y2="124.8" stroke="#f3a30c" stroke-width="1"/>
<rect x="421.00" y="116.3" width="3" height="3.6" fill="#f3a30c"/>
<line x1="425.50" y1="100.6" x2="425.50" y2="116.7" stroke="#f3a30c" stroke-width="1"/>
<rect x="424.50" y="102.5" width="2" height="8.4" fill="#fffbe0" stroke="#f3a30c" stroke-width="1"/>
<line x1="427.50" y1="96.7" x2="427.50" y2="113.9" stroke="#f3a30c" stroke-width="1"/>
<rect x="426.00" y="104.6" width="3" height="7.4" fill="#f3a30c"/>
<line x1="430.50" y1="101.4" x2="430.50" y2="116.8" stroke="#f3a30c" stroke-width="1"/>
<rect x="429.50" y="103.3" width="2" height="9.6" fill="#fffbe0" stroke="#f3a30c" stroke-width="1"/>
<line x1="433.50" y1="108.2" x2="433.50" y2="125.4" stroke="#f3a30c" stroke-width="1"/>
<rect x="432.00" y="110.3" width="3" height="6.6" fill="#f3a30c"/>
<line x1="435.50" y1="111.8" x2="435.50" y2="128.9" stroke="#f3a30c" stroke-width="1"/>
<rect x="434.50" y="117.8" width="2" height="6.3" fill="#fffbe0" stroke="#f3a30c" stroke-width="1"/>
<line x1="438.50" y1="116.6" x2="438.50" y2="125.7" stroke="#f3a30c" stroke-width="1"/>
<rect x="437.50" y="117.1" width="2" height="7.3" fill="#fffbe0" stroke="#f3a30c" stroke-width="1"/>
<line x1="441.50" y1="114.2" x2="441.50" y2="129.3" stroke="#f3a30c" stroke-width="1"/>
<rect x="440.50" y="116.4" width="2" height="10.1" fill="#fffbe0" stroke="#f3a30c" stroke-width="1"/>
<line x1="443.50" y1="119.9" x2="443.50" y2="134.8" stroke="#f3a30c" stroke-width="1"/>
<rect x="442.00" y="123.8" width="3" height="9.7" fill="#f3a30c"/>
<line x1="446.50" y1="122.7" x2="446.50" y2="138.1" stroke="#f3a30c" stroke-width="1"/>
<rect x="445.00" y="123.9" width="3" height="11.2" fill="#f3a30c"/>
<line x1="448.50" y1="126.6" x2="448.50" y2="139.9" stroke="#f3a30c" stroke-width="1"/>
<rect x="447.50" y="128.5" width="2" height="5.8" fill="#fffbe0" stroke="#f3a30c" stroke-width="1"/>
<line x1="451.50" y1="127.4" x2="451.50" y2="140.0" stroke="#f3a30c" stroke-width="1"/>
<rect x="450.50" y="129.0" width="2" height="7.7" fill="#fffbe0" stroke="#f3a30c" stroke-width="1"/>
<line x1="454.50" y1="132.5" x2="454.50" y2="143.3" stroke="#f3a30c" stroke-width="1"/>
<rect x="453.00" y="137.3" width="3" height="4.9" fill="#f3a30c"/>
<line x1="456.50" y1="133.4" x2="456.50" y2="145.1" stroke="#f3a30c" stroke-width="1"/>
<rect x="455.00" y="137.6" width="3" height="6.6" fill="#f3a30c"/>
<line x1="459.50" y1="137.8" x2="459.50" y2="149.1" stroke="#f3a30c" stroke-width="1"/>
<rect x="458.50" y="138.5" width="2" height="5.4" fill="#fffbe0" stroke="#f3a30c" stroke-width="1"/>
<line x1="462.50" y1="139.9" x2="462.50" y2="149.5" stroke="#f3a30c" stroke-width="1"/>
<rect x="461.00" y="140.7" width="3" height="7.4" fill="#f3a30c"/>
<line x1="464.50" y1="142.6" x2="464.50" y2="157.1" stroke="#f3a30c" stroke-width="1"/>
<rect x="463.50" y="146.7" width="2" height="10.1" fill="#fffbe0" stroke="#f3a30c" stroke-width="1"/>
<line x1="467.50" y1="144.1" x2="467.50" y2="156.7" stroke="#f3a30c" stroke-width="1"/>
<rect x="466.50" y="146.7" width="2" height="5.6" fill="#fffbe0" stroke="#f3a30c" stroke-width="1"/>
<line x1="469.50" y1="141.5" x2="469.50" y2="154.0" stroke="#f3a30c" stroke-width="1"/>
<rect x="468.50" y="144.6" width="2" height="7.7" fill="#fffbe0" stroke="#f3a30c" stroke-width="1"/>
<line x1="472.50" y1="141.3" x2="472.50" y2="153.7" stroke="#f3a30c" stroke-width="1"/>
<rect x="471.50" y="142.1" width="2" height="8.1" fill="#fffbe0" stroke="#f3a30c" stroke-width="1"/>
<line x1="475.50" y1="142.9" x2="475.50" y2="155.7" stroke="#f3a30c" stroke-width="1"/>
<rect x="474.50" y="143.2" width="2" height="7.7" fill="#fffbe0" stroke="#f3a30c" stroke-width="1"/>
<line x1="477.50" y1="144.0" x2="477.50" y2="158.0" stroke="#f3a30c" stroke-width="1"/>
<rect x="476.50" y="144.4" width="2" height="9.0" fill="#fffbe0" stroke="#f3a30c" stroke-width="1"/>
<line x1="480.50" y1="147.4" x2="480.50" y2="160.9" stroke="#f3a30c" stroke-width="1"/>
<rect x="479.00" y="149.5" width="3" height="6.5" fill="#f3a30c"/>
<line x1="483.50" y1="145.3" x2="483.50" y2="160.3" stroke="#f3a30c" stroke-width="1"/>
<rect x="482.00" y="148.3" width="3" height="7.7" fill="#f3a30c"/>
<line x1="485.50" y1="144.5" x2="485.50" y2="159.4" stroke="#f3a30c" stroke-width="1"/>
<rect x="484.50" y="150.6" width="2" height="6.5" fill="#fffbe0" stroke="#f3a30c" stroke-width="1"/>
<line x1="488.50" y1="137.8" x2="488.50" y2="155.2" stroke="#f3a30c" stroke-width="1"/>
<rect x="487.50" y="144.4" width="2" height="9.4" fill="#fffbe0" stroke="#f3a30c" stroke-width="1"/>
<line x1="490.50" y1="144.8" x2="490.50" y2="162.6" stroke="#f3a30c" stroke-width="1"/>
<rect x="489.00" y="145.0" width="3" height="7.5" fill="#f3a30c"/>
<line x1="493.50" y1="152.4" x2="493.50" y2="172.7" stroke="#f3a30c" stroke-width="1"/>
<rect x="492.50" y="160.1" width="2" height="7.9" fill="#fffbe0" stroke="#f3a30c" stroke-width="1"/>
<line x1="496.50" y1="155.6" x2="496.50" y2="181.9" stroke="#f3a30c" stroke-width="1"/>
<rect x="495.00" y="162.8" width="3" height="12.5" fill="#f3a30c"/>
<line x1="498.50" y1="168.4" x2="498.50" y2="188.0" stroke="#f3a30c" stroke-width="1"/>
<rect x="497.50" y="173.8" width="2" height="14.0" fill="#fffbe0" stroke="#f3a30c" stroke-width="1"/>
<line x1="501.50" y1="175.8" x2="501.50" y2="189.1" stroke="#f3a30c" stroke-width="1"/>
<rect x="500.50" y="177.2" width="2" height="10.5" fill="#fffbe0" stroke="#f3a30c" stroke-width="1"/>
<line x1="504.50" y1="182.0" x2="504.50" y2="194.3" stroke="#f3a30c" stroke-width="1"/>
<rect x="503.00" y="183.9" width="3" height="9.3" fill="#f3a30c"/>
<line x1="506.50" y1="189.5" x2="506.50" y2="207.8" stroke="#f3a30c" stroke-width="1"/>
<rect x="505.00" y="193.5" width="3" height="8.2" fill="#f3a30c"/>
<line x1="509.50" y1="196.7" x2="509.50" y2="216.1" stroke="#f3a30c" stroke-width="1"/>
<rect x="508.00" y="201.0" width="3" height="8.7" fill="#f3a30c"/>
<line x1="511.50" y1="199.3" x2="511.50" y2="225.7" stroke="#f3a30c" stroke-width="1"/>
<rect x="510.00" y="209.6" width="3" height="12.1" fill="#f3a30c"/>
<line x1="514.50" y1="198.7" x2="514.50" y2="216.0" stroke="#f3a30c" stroke-width="1"/>
<rect x="513.00" y="198.9" width="3" height="11.9" fill="#f3a30c"/>
<line x1="517.50" y1="198.4" x2="517.50" y2="213.7" stroke="#f3a30c" stroke-width="1"/>
<rect x="516.50" y="202.3" width="2" height="9.2" fill="#fffbe0" stroke="#f3a30c" stroke-width="1"/>
<line x1="519.50" y1="195.9" x2="519.50" y2="216.7" stroke="#f3a30c" stroke-width="1"/>
<rect x="518.50" y="202.2" width="2" height="11.3" fill="#fffbe0" stroke="#f3a30c" stroke-width="1"/>
<line x1="522.50" y1="196.6" x2="522.50" y2="219.7" stroke="#f3a30c" stroke-width="1"/>
<rect x="521.50" y="200.8" width="2" height="14.5" fill="#fffbe0" stroke="#f3a30c" stroke-width="1"/>
<line x1="525.50" y1="209.7" x2="525.50" y2="219.3" stroke="#f3a30c" stroke-width="1"/>
<rect x="524.00" y="210.4" width="3" height="5.4" fill="#f3a30c"/>
<line x1="527.50" y1="210.1" x2="527.50" y2="221.4" stroke="#f3a30c" stroke-width="1"/>
<rect x="526.50" y="210.6" width="2" height="6.1" fill="#fffbe0" stroke="#f3a30c" stroke-width="1"/>
<line x1="530.50" y1="209.0" x2="530.50" y2="218.0" stroke="#f3a30c" stroke-width="1"/>
<rect x="529.00" y="209.3" width="3" height="5.7" fill="#f3a30c"/>
<line x1="532.50" y1="209.2" x2="532.50" y2="216.4" stroke="#f3a30c" stroke-width="1"/>
<rect x="531.50" y="211.5" width="2" height="2.7" fill="#fffbe0" stroke="#f3a30c" stroke-width="1"/>
<line x1="535.50" y1="208.0" x2="535.50" y2="214.6" stroke="#f3a30c" stroke-width="1"/>
<rect x="534.00" y="209.7" width="3" height="4.9" fill="#f3a30c"/>
<line x1="538.50" y1="206.9" x2="538.50" y2="213.9" stroke="#f3a30c" stroke-width="1"/>
<rect x="537.00" y="207.6" width="3" height="5.6" fill="#f3a30c"/>
<line x1="540.50" y1="206.7" x2="540.50" y2="213.7" stroke="#f3a30c" stroke-width="1"/>
<rect x="539.50" y="208.6" width="2" height="4.9" fill="#fffbe0" stroke="#f3a30c" stroke-width="1"/>
<line x1="543.50" y1="202.8" x2="543.50" y2="211.5" stroke="#f3a30c" stroke-width="1"/>
<rect x="542.50" y="207.3" width="2" height="3.6" fill="#fffbe0" stroke="#f3a30c" stroke-width="1"/>
<line x1="546.50" y1="203.7" x2="546.50" y2="213.1" stroke="#f3a30c" stroke-width="1"/>
<rect x="545.50" y="207.4" width="2" height="5.4" fill="#fffbe0" stroke="#f3a30c" stroke-width="1"/>
<line x1="548.50" y1="201.0" x2="548.50" y2="214.6" stroke="#f3a30c" stroke-width="1"/>
<rect x="547.50" y="201.3" width="2" height="6.7" fill="#fffbe0" stroke="#f3a30c" stroke-width="1"/>
<line x1="551.50" y1="196.8" x2="551.50" y2="218.4" stroke="#f3a30c" stroke-width="1"/>
<rect x="550.50" y="203.4" width="2" height="14.2" fill="#fffbe0" stroke="#f3a30c" stroke-width="1"/>
<line x1="553.50" y1="200.9" x2="553.50" y2="225.5" stroke="#f3a30c" stroke-width="1"/>
<rect x="552.50" y="207.3" width="2" height="14.5" fill="#fffbe0" stroke="#f3a30c" stroke-width="1"/>
<line x1="556.50" y1="204.9" x2="556.50" y2="220.5" stroke="#f3a30c" stroke-width="1"/>
<rect x="555.50" y="210.2" width="2" height="9.6" fill="#fffbe0" stroke="#f3a30c" stroke-width="1"/>
<line x1="559.50" y1="206.7" x2="559.50" y2="219.3" stroke="#f3a30c" stroke-width="1"/>
<rect x="558.50" y="211.5" width="2" height="6.6" fill="#fffbe0" stroke="#f3a30c" stroke-width="1"/>
<line x1="561.50" y1="206.6" x2="561.50" y2="219.2" stroke="#f3a30c" stroke-width="1"/>
<rect x="560.50" y="211.3" width="2" height="6.4" fill="#fffbe0" stroke="#f3a30c" stroke-width="1"/>
<line x1="564.50" y1="202.1" x2="564.50" y2="216.7" stroke="#f3a30c" stroke-width="1"/>
<rect x="563.50" y="209.6" width="2" height="5.4" fill="#fffbe0" stroke="#f3a30c" stroke-width="1"/>
<line x1="567.50" y1="202.0" x2="567.50" y2="213.7" stroke="#f3a30c" stroke-width="1"/>
<rect x="566.50" y="205.0" width="2" height="7.2" fill="#fffbe0" stroke="#f3a30c" stroke-width="1"/>
<line x1="569.50" y1="194.9" x2="569.50" y2="215.7" stroke="#f3a30c" stroke-width="1"/>
<rect x="568.50" y="202.3" width="2" height="8.7" fill="#fffbe0" stroke="#f3a30c" stroke-width="1"/>
<line x1="572.50" y1="178.0" x2="572.50" y2="200.6" stroke="#f3a30c" stroke-width="1"/>
<rect x="571.00" y="181.0" width="3" height="9.2" fill="#f3a30c"/>
<line x1="574.50" y1="140.8" x2="574.50" y2="185.9" stroke="#f3a30c" stroke-width="1"/>
<rect x="573.50" y="143.2" width="2" height="23.0" fill="#fffbe0" stroke="#f3a30c" stroke-width="1"/>
<line x1="577.50" y1="147.4" x2="577.50" y2="175.5" stroke="#f3a30c" stroke-width="1"/>
<rect x="576.00" y="149.6" width="3" height="17.3" fill="#f3a30c"/>
<line x1="580.50" y1="151.1" x2="580.50" y2="175.7" stroke="#f3a30c" stroke-width="1"/>
<rect x="579.50" y="152.5" width="2" height="19.0" fill="#fffbe0" stroke="#f3a30c" stroke-width="1"/>
<line x1="582.50" y1="150.2" x2="582.50" y2="172.8" stroke="#f3a30c" stroke-width="1"/>
<rect x="581.50" y="154.7" width="2" height="16.8" fill="#fffbe0" stroke="#f3a30c" stroke-width="1"/>
<line x1="585.50" y1="150.5" x2="585.50" y2="175.4" stroke="#f3a30c" stroke-width="1"/>
<rect x="584.50" y="155.6" width="2" height="15.9" fill="#fffbe0" stroke="#f3a30c" stroke-width="1"/>
<line x1="588.50" y1="153.7" x2="588.50" y2="174.4" stroke="#f3a30c" stroke-width="1"/>
<rect x="587.50" y="157.1" width="2" height="16.0" fill="#fffbe0" stroke="#f3a30c" stroke-width="1"/>
<line x1="590.50" y1="166.6" x2="590.50" y2="178.8" stroke="#f3a30c" stroke-width="1"/>
<rect x="589.50" y="168.6" width="2" height="7.2" fill="#fffbe0" stroke="#f3a30c" stroke-width="1"/>
<line x1="593.50" y1="166.8" x2="593.50" y2="177.7" stroke="#f3a30c" stroke-width="1"/>
<rect x="592.00" y="170.7" width="3" height="3.9" fill="#f3a30c"/>
<line x1="595.50" y1="169.0" x2="595.50" y2="180.4" stroke="#f3a30c" stroke-width="1"/>
<rect x="594.00" y="171.2" width="3" height="7.1" fill="#f3a30c"/>
<line x1="598.50" y1="175.0" x2="598.50" y2="183.3" stroke="#f3a30c" stroke-width="1"/>
<rect x="597.50" y="176.3" width="2" height="4.1" fill="#fffbe0" stroke="#f3a30c" stroke-width="1"/>
<line x1="601.50" y1="175.8" x2="601.50" y2="181.9" stroke="#f3a30c" stroke-width="1"/>
<rect x="600.00" y="175.8" width="3" height="4.1" fill="#f3a30c"/>
<line x1="603.50" y1="173.1" x2="603.50" y2="178.0" stroke="#f3a30c" stroke-width="1"/>
<rect x="602.50" y="173.8" width="2" height="3.3" fill="#fffbe0" stroke="#f3a30c" stroke-width="1"/>
<line x1="606.50" y1="162.7" x2="606.50" y2="177.9" stroke="#f3a30c" stroke-width="1"/>
<rect x="605.00" y="166.0" width="3" height="5.6" fill="#f3a30c"/>
<line x1="609.50" y1="163.6" x2="609.50" y2="177.7" stroke="#f3a30c" stroke-width="1"/>
<rect x="608.00" y="164.9" width="3" height="9.4" fill="#f3a30c"/>
<line x1="611.50" y1="165.7" x2="611.50" y2="191.7" stroke="#f3a30c" stroke-width="1"/>
<rect x="610.00" y="168.6" width="3" height="15.2" fill="#f3a30c"/>
<line x1="614.50" y1="152.4" x2="614.50" y2="177.7" stroke="#f3a30c" stroke-width="1"/>
<rect x="613.50" y="152.5" width="2" height="18.9" fill="#fffbe0" stroke="#f3a30c" stroke-width="1"/>
<line x1="616.50" y1="144.2" x2="616.50" y2="164.5" stroke="#f3a30c" stroke-width="1"/>
<rect x="615.50" y="147.6" width="2" height="15.8" fill="#fffbe0" stroke="#f3a30c" stroke-width="1"/>
<line x1="619.50" y1="147.7" x2="619.50" y2="163.9" stroke="#f3a30c" stroke-width="1"/>
<rect x="618.00" y="155.7" width="3" height="7.4" fill="#f3a30c"/>
<line x1="622.50" y1="145.6" x2="622.50" y2="161.7" stroke="#f3a30c" stroke-width="1"/>
<rect x="621.00" y="147.2" width="3" height="12.7" fill="#f3a30c"/>
<line x1="624.50" y1="143.8" x2="624.50" y2="158.7" stroke="#f3a30c" stroke-width="1"/>
<rect x="623.00" y="148.7" width="3" height="8.2" fill="#f3a30c"/>
<line x1="627.50" y1="141.1" x2="627.50" y2="162.1" stroke="#f3a30c" stroke-width="1"/>
<rect x="626.00" y="141.7" width="3" height="13.2" fill="#f3a30c"/>
<line x1="630.50" y1="141.0" x2="630.50" y2="161.4" stroke="#f3a30c" stroke-width="1"/>
<rect x="629.50" y="152.4" width="2" height="8.1" fill="#fffbe0" stroke="#f3a30c" stroke-width="1"/>
<line x1="632.50" y1="142.3" x2="632.50" y2="157.5" stroke="#f3a30c" stroke-width="1"/>
<rect x="631.00" y="148.9" width="3" height="5.6" fill="#f3a30c"/>
<line x1="635.50" y1="144.3" x2="635.50" y2="154.6" stroke="#f3a30c" stroke-width="1"/>
<rect x="634.50" y="148.0" width="2" height="3.9" fill="#fffbe0" stroke="#f3a30c" stroke-width="1"/>
<line x1="637.50" y1="142.1" x2="637.50" y2="152.9" stroke="#f3a30c" stroke-width="1"/>
<rect x="636.00" y="142.2" width="3" height="8.1" fill="#f3a30c"/>
<line x1="640.50" y1="133.1" x2="640.50" y2="147.2" stroke="#f3a30c" stroke-width="1"/>
<rect x="639.50" y="134.9" width="2" height="5.6" fill="#fffbe0" stroke="#f3a30c" stroke-width="1"/>
<line x1="643.50" y1="127.4" x2="643.50" y2="146.8" stroke="#f3a30c" stroke-width="1"/>
<rect x="642.00" y="130.9" width="3" height="13.9" fill="#f3a30c"/>
<line x1="645.50" y1="131.6" x2="645.50" y2="143.6" stroke="#f3a30c" stroke-width="1"/>
<rect x="644.00" y="132.4" width="3" height="4.7" fill="#f3a30c"/>
<line x1="648.50" y1="131.1" x2="648.50" y2="142.4" stroke="#f3a30c" stroke-width="1"/>
<rect x="647.50" y="131.2" width="2" height="6.2" fill="#fffbe0" stroke="#f3a30c" stroke-width="1"/>
<line x1="651.50" y1="131.5" x2="651.50" y2="141.6" stroke="#f3a30c" stroke-width="1"/>
<rect x="650.00" y="133.1" width="3" height="5.2" fill="#f3a30c"/>
<line x1="653.50" y1="133.4" x2="653.50" y2="142.3" stroke="#f3a30c" stroke-width="1"/>
<rect x="652.50" y="133.5" width="2" height="5.6" fill="#fffbe0" stroke="#f3a30c" stroke-width="1"/>
<line x1="656.50" y1="133.7" x2="656.50" y2="143.2" stroke="#f3a30c" stroke-width="1"/>
<rect x="655.00" y="137.0" width="3" height="4.8" fill="#f3a30c"/>
<line x1="658.50" y1="134.1" x2="658.50" y2="143.5" stroke="#f3a30c" stroke-width="1"/>
<rect x="657.50" y="138.8" width="2" height="3.7" fill="#fffbe0" stroke="#f3a30c" stroke-width="1"/>
<line x1="661.50" y1="136.7" x2="661.50" y2="148.3" stroke="#f3a30c" stroke-width="1"/>
<rect x="660.50" y="140.2" width="2" height="8.1" fill="#fffbe0" stroke="#f3a30c" stroke-width="1"/>
<line x1="664.50" y1="137.9" x2="664.50" y2="148.2" stroke="#f3a30c" stroke-width="1"/>
<rect x="663.00" y="138.4" width="3" height="7.3" fill="#f3a30c"/>
<line x1="666.50" y1="139.5" x2="666.50" y2="149.2" stroke="#f3a30c" stroke-width="1"/>
<rect x="665.50" y="144.4" width="2" height="4.5" fill="#fffbe0" stroke="#f3a30c" stroke-width="1"/>
<line x1="669.50" y1="144.2" x2="669.50" y2="158.9" stroke="#f3a30c" stroke-width="1"/>
<rect x="668.00" y="144.9" width="3" height="8.4" fill="#f3a30c"/>
<line x1="672.50" y1="148.0" x2="672.50" y2="169.3" stroke="#f3a30c" stroke-width="1"/>
<rect x="671.00" y="153.7" width="3" height="14.1" fill="#f3a30c"/>
<line x1="674.50" y1="148.6" x2="674.50" y2="165.5" stroke="#f3a30c" stroke-width="1"/>
<rect x="673.50" y="155.7" width="2" height="8.9" fill="#fffbe0" stroke="#f3a30c" stroke-width="1"/>
<line x1="677.50" y1="145.1" x2="677.50" y2="163.6" stroke="#f3a30c" stroke-width="1"/>
<rect x="676.00" y="147.8" width="3" height="8.2" fill="#f3a30c"/>
<line x1="679.50" y1="139.7" x2="679.50" y2="161.8" stroke="#f3a30c" stroke-width="1"/>
<rect x="678.00" y="141.0" width="3" height="16.5" fill="#f3a30c"/>
<line x1="682.50" y1="139.0" x2="682.50" y2="156.0" stroke="#f3a30c" stroke-width="1"/>
<rect x="681.50" y="142.4" width="2" height="11.7" fill="#fffbe0" stroke="#f3a30c" stroke-width="1"/>
<line x1="685.50" y1="138.3" x2="685.50" y2="158.2" stroke="#f3a30c" stroke-width="1"/>
<rect x="684.00" y="141.9" width="3" height="14.5" fill="#f3a30c"/>
<line x1="687.50" y1="145.0" x2="687.50" y2="163.2" stroke="#f3a30c" stroke-width="1"/>
<rect x="686.50" y="148.1" width="2" height="12.7" fill="#fffbe0" stroke="#f3a30c" stroke-width="1"/>
<line x1="690.50" y1="163.2" x2="690.50" y2="176.3" stroke="#f3a30c" stroke-width="1"/>
<rect x="689.50" y="164.6" width="2" height="6.0" fill="#fffbe0" stroke="#f3a30c" stroke-width="1"/>
<line x1="693.50" y1="172.3" x2="693.50" y2="189.4" stroke="#f3a30c" stroke-width="1"/>
<rect x="692.50" y="173.8" width="2" height="7.2" fill="#fffbe0" stroke="#f3a30c" stroke-width="1"/>
<line x1="695.50" y1="172.3" x2="695.50" y2="184.3" stroke="#f3a30c" stroke-width="1"/>
<rect x="694.50" y="174.6" width="2" height="5.1" fill="#fffbe0" stroke="#f3a30c" stroke-width="1"/>
<line x1="698.50" y1="174.2" x2="698.50" y2="180.9" stroke="#f3a30c" stroke-width="1"/>
<rect x="697.50" y="178.1" width="2" height="2.6" fill="#fffbe0" stroke="#f3a30c" stroke-width="1"/>
<line x1="700.50" y1="158.1" x2="700.50" y2="173.3" stroke="#f3a30c" stroke-width="1"/>
<rect x="699.50" y="161.4" width="2" height="10.7" fill="#fffbe0" stroke="#f3a30c" stroke-width="1"/>
<line x1="703.50" y1="153.3" x2="703.50" y2="173.3" stroke="#f3a30c" stroke-width="1"/>
<rect x="702.50" y="155.8" width="2" height="8.0" fill="#fffbe0" stroke="#f3a30c" stroke-width="1"/>
<line x1="706.50" y1="145.0" x2="706.50" y2="164.1" stroke="#f3a30c" stroke-width="1"/>
<rect x="705.00" y="148.9" width="3" height="13.5" fill="#f3a30c"/>
<line x1="708.50" y1="147.3" x2="708.50" y2="158.7" stroke="#f3a30c" stroke-width="1"/>
<rect x="707.50" y="151.4" width="2" height="4.7" fill="#fffbe0" stroke="#f3a30c" stroke-width="1"/>
<line x1="711.50" y1="148.2" x2="711.50" y2="155.8" stroke="#f3a30c" stroke-width="1"/>
<rect x="710.00" y="150.2" width="3" height="4.2" fill="#f3a30c"/>
<line x1="714.50" y1="149.7" x2="714.50" y2="163.1" stroke="#f3a30c" stroke-width="1"/>
<rect x="713.00" y="153.6" width="3" height="9.0" fill="#f3a30c"/>
<line x1="716.50" y1="151.3" x2="716.50" y2="161.5" stroke="#f3a30c" stroke-width="1"/>
<rect x="715.00" y="153.5" width="3" height="6.7" fill="#f3a30c"/>
<line x1="719.50" y1="147.3" x2="719.50" y2="159.1" stroke="#f3a30c" stroke-width="1"/>
<rect x="718.00" y="150.3" width="3" height="4.6" fill="#f3a30c"/>
<line x1="721.50" y1="148.1" x2="721.50" y2="158.2" stroke="#f3a30c" stroke-width="1"/>
<rect x="720.00" y="150.4" width="3" height="4.7" fill="#f3a30c"/>
<polyline points="9.0,80.6 20.8,79.6 34.6,78.6 38.6,77.2 43.5,79.6 48.4,84.5 56.3,89.4 69.0,89.0 75.6,92.9 82.2,97.0 90.4,100.3 95.3,101.1 105.2,99.5 115.0,97.0 121.6,97.5 129.0,101.1 134.9,105.6 140.8,113.5 146.8,121.4 152.7,128.3 160.6,135.2 168.4,141.1 176.3,145.1 182.3,143.5 189.0,144.5 194.9,147.2 202.8,150.2 212.7,155.1 222.5,159.0 232.4,160.0 240.3,159.5 246.2,158.5 249.0,155.0 255.6,151.3 262.2,145.4 268.7,140.8 275.3,137.5 283.2,134.2 291.1,132.9 296.4,131.6 301.6,125.0 306.9,114.5 309.0,112.5 312.3,108.4 320.0,103.0 330.7,102.2 343.0,102.2 349.2,100.7 360.0,99.2 367.3,97.0 374.8,98.3 380.4,103.0 386.0,110.4 395.3,117.9 402.8,123.5 410.2,125.4 418.0,124.4 425.0,122.7 432.0,121.5 442.6,121.8 449.6,123.6 456.6,128.0 463.6,133.2 470.6,137.6 478.0,141.1 485.2,143.4 492.1,148.0 499.0,155.0 510.6,168.8 522.0,182.6 531.3,191.8 536.0,195.9 545.6,199.5 555.3,201.9 567.3,204.3 572.1,203.1 577.0,194.7 584.2,188.7 590.0,184.5 596.0,181.1 601.9,183.0 609.8,180.1 615.7,176.1 625.6,170.2 635.4,165.3 645.3,157.4 655.2,151.5 666.0,149.0 670.6,150.5 677.2,152.1 683.7,151.3 688.7,153.8 693.6,157.9 698.5,160.4 705.1,160.9 710.0,159.5 716.6,158.7 722.4,157.6" fill="none" stroke="#b42a1a" stroke-width="1.1" stroke-linejoin="round"/>
<polyline points="9.0,65.9 13.4,66.3 21.3,67.5 29.2,68.5 39.7,69.0 44.1,71.0 49.0,72.7 54.4,75.6 62.3,77.6 69.0,78.5 78.9,81.6 90.4,86.3 100.3,88.8 118.3,89.8 126.6,91.4 133.2,94.1 139.7,98.7 146.3,102.0 152.9,106.6 160.6,111.6 168.4,116.5 176.3,121.8 189.0,124.4 198.9,129.4 208.7,134.4 216.6,137.3 228.4,140.9 238.3,143.6 249.0,144.8 256.9,143.4 262.2,141.4 268.7,139.5 275.3,138.2 283.2,136.8 291.1,135.8 297.7,134.9 301.6,131.6 309.0,126.3 318.9,121.5 323.0,119.9 338.4,116.0 353.8,112.2 360.0,111.4 369.2,108.6 376.7,109.0 386.0,112.3 395.3,116.4 404.6,118.8 418.0,119.8 428.5,119.2 442.6,119.2 451.3,121.8 461.9,124.5 470.6,128.0 478.0,131.5 494.4,136.5 502.8,141.5 510.6,148.0 522.0,157.3 531.0,163.5 536.0,165.8 545.6,170.6 555.3,176.6 567.3,181.4 574.6,181.4 584.2,178.6 592.0,177.8 600.0,178.2 607.8,178.5 615.7,177.1 625.6,173.8 635.4,171.2 645.3,167.3 655.2,163.3 666.0,161.8 672.2,160.9 680.4,160.4 685.4,159.2 692.0,160.4 698.5,162.0 706.8,162.0 715.0,160.4 723.2,159.9" fill="none" stroke="#0505c0" stroke-width="2.5" stroke-linejoin="round"/>
<rect x="10" y="106" width="915" height="1" fill="#a82a2a"/>
<rect x="10" y="123" width="915" height="1" fill="#a82a2a"/>
<rect x="10" y="136" width="915" height="1" fill="#a82a2a"/>
<rect x="10" y="148" width="915" height="1" fill="#4ccad8"/>
<rect x="10" y="166" width="915" height="1" fill="#48984a"/>
<rect x="10" y="179" width="915" height="1" fill="#458a6c"/>
<rect x="10" y="197" width="915" height="1" fill="#458a6c"/>
<rect x="10" y="227" width="915" height="1" fill="#458a6c"/>
<rect x="10" y="29" width="304" height="11" fill="#fff"/>
<text x="12" y="39.2" font-size="10" fill="#b01818" stroke="#b01818" stroke-width="0.25" textLength="147" lengthAdjust="spacingAndGlyphs" style='font-family:"Liberation Sans",sans-serif'>Exponential_Moving_Average</text>
<text x="165" y="39.2" font-size="10" fill="#10109a" stroke="#10109a" stroke-width="0.25" textLength="147" lengthAdjust="spacingAndGlyphs" style='font-family:"Liberation Sans",sans-serif'>Exponential_Moving_Average</text>
<line x1="143" y1="28.5" x2="770" y2="275.5" stroke="#1a1a80" stroke-width="1.2"/>
<line x1="9.5" y1="121" x2="400" y2="275.5" stroke="#1a1a80" stroke-width="1.2"/>
<rect x="10" y="351" width="713" height="1" fill="#10108a"/>
<rect x="10" y="420" width="713" height="1" fill="#10108a"/>
<rect x="10.0" y="311.0" width="1" height="1.0" fill="#c02828"/>
<rect x="12.6" y="310.7" width="1" height="1.3" fill="#c02828"/>
<rect x="15.2" y="310.5" width="1" height="1.5" fill="#c02828"/>
<rect x="17.9" y="311.0" width="1" height="1.0" fill="#c02828"/>
<rect x="20.5" y="311" width="1" height="1.0" fill="#c02828"/>
<rect x="23.1" y="311" width="1" height="1.0" fill="#c02828"/>
<rect x="25.8" y="311" width="1" height="1.0" fill="#c02828"/>
<rect x="28.4" y="311" width="1" height="1.0" fill="#c02828"/>
<rect x="31.0" y="311" width="1" height="1.0" fill="#c02828"/>
<rect x="33.6" y="311" width="1" height="1.0" fill="#c02828"/>
<rect x="36.2" y="311" width="1" height="1.0" fill="#c02828"/>
<rect x="38.9" y="311" width="1" height="1.0" fill="#c02828"/>
<rect x="41.5" y="311" width="1" height="1.0" fill="#c02828"/>
<rect x="44.1" y="311" width="1" height="2.2" fill="#c02828"/>
<rect x="46.8" y="311" width="1" height="3.7" fill="#c02828"/>
<rect x="49.4" y="311" width="1" height="3.9" fill="#c02828"/>
<rect x="52.0" y="311" width="1" height="2.8" fill="#c02828"/>
<rect x="54.6" y="311" width="1" height="1.0" fill="#c02828"/>
<rect x="57.2" y="311" width="1" height="1.0" fill="#c02828"/>
<rect x="59.9" y="311" width="1" height="1.0" fill="#c02828"/>
<rect x="62.5" y="311" width="1" height="1.0" fill="#c02828"/>
<rect x="65.1" y="311" width="1" height="1.0" fill="#c02828"/>
<rect x="67.8" y="311" width="1" height="1.0" fill="#c02828"/>
<rect x="70.4" y="311" width="1" height="1.0" fill="#c02828"/>
<rect x="73.0" y="311" width="1" height="2.0" fill="#c02828"/>
<rect x="75.6" y="311" width="1" height="3.7" fill="#c02828"/>
<rect x="78.2" y="311" width="1" height="3.9" fill="#c02828"/>
<rect x="80.9" y="311" width="1" height="2.9" fill="#c02828"/>
<rect x="83.5" y="311" width="1" height="1.0" fill="#c02828"/>
<rect x="86.1" y="311" width="1" height="1.0" fill="#c02828"/>
<rect x="88.8" y="311" width="1" height="1.0" fill="#c02828"/>
<rect x="91.4" y="311" width="1" height="1.0" fill="#c02828"/>
<rect x="94.0" y="311.0" width="1" height="1.0" fill="#c02828"/>
<rect x="96.6" y="310.6" width="1" height="1.4" fill="#c02828"/>
<rect x="99.2" y="310.2" width="1" height="1.8" fill="#c02828"/>
<rect x="101.9" y="310.0" width="1" height="2.0" fill="#c02828"/>
<rect x="104.5" y="310.1" width="1" height="1.9" fill="#c02828"/>
<rect x="107.1" y="310.4" width="1" height="1.6" fill="#c02828"/>
<rect x="109.8" y="310.9" width="1" height="1.1" fill="#c02828"/>
<rect x="112.4" y="311.0" width="1" height="1.0" fill="#c02828"/>
<rect x="115.0" y="311" width="1" height="1.0" fill="#c02828"/>
<rect x="117.6" y="311" width="1" height="1.0" fill="#c02828"/>
<rect x="120.2" y="311" width="1" height="1.0" fill="#c02828"/>
<rect x="122.9" y="311" width="1" height="1.0" fill="#c02828"/>
<rect x="125.5" y="311" width="1" height="1.0" fill="#c02828"/>
<rect x="128.1" y="311" width="1" height="1.0" fill="#c02828"/>
<rect x="130.8" y="311" width="1" height="1.9" fill="#c02828"/>
<rect x="133.4" y="311" width="1" height="3.1" fill="#c02828"/>
<rect x="136.0" y="311" width="1" height="3.9" fill="#c02828"/>
<rect x="138.6" y="311" width="1" height="4.3" fill="#c02828"/>
<rect x="141.2" y="311" width="1" height="4.4" fill="#c02828"/>
<rect x="143.9" y="311" width="1" height="4.1" fill="#c02828"/>
<rect x="146.5" y="311" width="1" height="3.5" fill="#c02828"/>
<rect x="149.1" y="311" width="1" height="2.4" fill="#c02828"/>
<rect x="151.8" y="311" width="1" height="1.0" fill="#c02828"/>
<rect x="154.4" y="311" width="1" height="1.0" fill="#c02828"/>
<rect x="157.0" y="311" width="1" height="1.0" fill="#c02828"/>
<rect x="159.6" y="311" width="1" height="1.0" fill="#c02828"/>
<rect x="162.2" y="311" width="1" height="1.0" fill="#c02828"/>
<rect x="164.9" y="311" width="1" height="1.0" fill="#c02828"/>
<rect x="167.5" y="311" width="1" height="1.0" fill="#c02828"/>
<rect x="170.1" y="311" width="1" height="1.0" fill="#c02828"/>
<rect x="172.8" y="310.4" width="1" height="1.6" fill="#c02828"/>
<rect x="175.4" y="308.6" width="1" height="3.4" fill="#c02828"/>
<rect x="178.0" y="307.7" width="1" height="4.3" fill="#c02828"/>
<rect x="180.6" y="307.5" width="1" height="4.5" fill="#c02828"/>
<rect x="183.2" y="308.1" width="1" height="3.9" fill="#c02828"/>
<rect x="185.9" y="309.4" width="1" height="2.6" fill="#c02828"/>
<rect x="188.5" y="311.0" width="1" height="1.0" fill="#c02828"/>
<rect x="191.1" y="311" width="1" height="1.0" fill="#c02828"/>
<rect x="193.8" y="311" width="1" height="1.0" fill="#c02828"/>
<rect x="196.4" y="311" width="1" height="1.0" fill="#c02828"/>
<rect x="199.0" y="311" width="1" height="1.0" fill="#c02828"/>
<rect x="201.6" y="311" width="1" height="1.4" fill="#c02828"/>
<rect x="204.2" y="311" width="1" height="1.5" fill="#c02828"/>
<rect x="206.9" y="311" width="1" height="1.1" fill="#c02828"/>
<rect x="209.5" y="311" width="1" height="1.0" fill="#c02828"/>
<rect x="212.1" y="311" width="1" height="1.0" fill="#c02828"/>
<rect x="214.8" y="311" width="1" height="1.0" fill="#c02828"/>
<rect x="217.4" y="311" width="1" height="1.0" fill="#c02828"/>
<rect x="220.0" y="311" width="1" height="1.0" fill="#c02828"/>
<rect x="222.6" y="311" width="1" height="1.0" fill="#c02828"/>
<rect x="225.2" y="311" width="1" height="1.0" fill="#c02828"/>
<rect x="227.9" y="311" width="1" height="1.0" fill="#c02828"/>
<rect x="230.5" y="311" width="1" height="1.0" fill="#c02828"/>
<rect x="233.1" y="311" width="1" height="1.0" fill="#c02828"/>
<rect x="235.8" y="311" width="1" height="1.0" fill="#c02828"/>
<rect x="238.4" y="311" width="1" height="1.0" fill="#c02828"/>
<rect x="241.0" y="311" width="1" height="1.0" fill="#c02828"/>
<rect x="243.6" y="311" width="1" height="1.0" fill="#c02828"/>
<rect x="246.2" y="311" width="1" height="1.0" fill="#c02828"/>
<rect x="248.9" y="311" width="1" height="1.0" fill="#c02828"/>
<rect x="251.5" y="311.0" width="1" height="1.0" fill="#c02828"/>
<rect x="254.1" y="309.8" width="1" height="2.2" fill="#c02828"/>
<rect x="256.8" y="309.1" width="1" height="2.9" fill="#c02828"/>
<rect x="259.4" y="308.8" width="1" height="3.2" fill="#c02828"/>
<rect x="262.0" y="309.0" width="1" height="3.0" fill="#c02828"/>
<rect x="264.6" y="309.7" width="1" height="2.3" fill="#c02828"/>
<rect x="267.2" y="310.9" width="1" height="1.1" fill="#c02828"/>
<rect x="269.9" y="311" width="1" height="1.0" fill="#c02828"/>
<rect x="272.5" y="311" width="1" height="1.0" fill="#c02828"/>
<rect x="275.1" y="311" width="1" height="1.0" fill="#c02828"/>
<rect x="277.8" y="311" width="1" height="1.0" fill="#c02828"/>
<rect x="280.4" y="311" width="1" height="1.5" fill="#c02828"/>
<rect x="283.0" y="311" width="1" height="1.0" fill="#c02828"/>
<rect x="285.6" y="311" width="1" height="1.0" fill="#c02828"/>
<rect x="288.2" y="311" width="1" height="1.0" fill="#c02828"/>
<rect x="290.9" y="311" width="1" height="1.0" fill="#c02828"/>
<rect x="293.5" y="311" width="1" height="1.0" fill="#c02828"/>
<rect x="296.1" y="311" width="1" height="1.0" fill="#c02828"/>
<rect x="298.8" y="311" width="1" height="1.0" fill="#c02828"/>
<rect x="301.4" y="307.6" width="1" height="4.4" fill="#c02828"/>
<rect x="304.0" y="305.2" width="1" height="6.8" fill="#c02828"/>
<rect x="306.6" y="305.5" width="1" height="6.5" fill="#c02828"/>
<rect x="309.2" y="308.6" width="1" height="3.4" fill="#c02828"/>
<rect x="311.9" y="311" width="1" height="1.0" fill="#c02828"/>
<rect x="314.5" y="311" width="1" height="1.0" fill="#c02828"/>
<rect x="317.1" y="311" width="1" height="1.0" fill="#c02828"/>
<rect x="319.8" y="311" width="1" height="1.3" fill="#c02828"/>
<rect x="322.4" y="311" width="1" height="2.8" fill="#c02828"/>
<rect x="325.0" y="311" width="1" height="3.8" fill="#c02828"/>
<rect x="327.6" y="311" width="1" height="4.3" fill="#c02828"/>
<rect x="330.2" y="311" width="1" height="4.4" fill="#c02828"/>
<rect x="332.9" y="311" width="1" height="4.0" fill="#c02828"/>
<rect x="335.5" y="311" width="1" height="3.3" fill="#c02828"/>
<rect x="338.1" y="311" width="1" height="2.0" fill="#c02828"/>
<rect x="340.8" y="311" width="1" height="1.0" fill="#c02828"/>
<rect x="343.4" y="311" width="1" height="1.0" fill="#c02828"/>
<rect x="346.0" y="311" width="1" height="1.0" fill="#c02828"/>
<rect x="348.6" y="311" width="1" height="1.0" fill="#c02828"/>
<rect x="351.2" y="311" width="1" height="1.0" fill="#c02828"/>
<rect x="353.9" y="311" width="1" height="1.0" fill="#c02828"/>
<rect x="356.5" y="311" width="1" height="1.0" fill="#c02828"/>
<rect x="359.1" y="311" width="1" height="1.0" fill="#c02828"/>
<rect x="361.8" y="311" width="1" height="1.0" fill="#c02828"/>
<rect x="364.4" y="311" width="1" height="1.0" fill="#c02828"/>
<rect x="367.0" y="311" width="1" height="1.0" fill="#c02828"/>
<rect x="369.6" y="311" width="1" height="1.0" fill="#c02828"/>
<rect x="372.2" y="311" width="1" height="1.0" fill="#c02828"/>
<rect x="374.9" y="311" width="1" height="1.0" fill="#c02828"/>
<rect x="377.5" y="311" width="1" height="1.0" fill="#c02828"/>
<rect x="380.1" y="311" width="1" height="3.3" fill="#c02828"/>
<rect x="382.8" y="311" width="1" height="5.7" fill="#c02828"/>
<rect x="385.4" y="311" width="1" height="6.4" fill="#c02828"/>
<rect x="388.0" y="311" width="1" height="5.2" fill="#c02828"/>
<rect x="390.6" y="311" width="1" height="2.1" fill="#c02828"/>
<rect x="393.2" y="311" width="1" height="1.0" fill="#c02828"/>
<rect x="395.9" y="311" width="1" height="1.0" fill="#c02828"/>
<rect x="398.5" y="311" width="1" height="1.0" fill="#c02828"/>
<rect x="401.1" y="311" width="1" height="1.0" fill="#c02828"/>
<rect x="403.8" y="311" width="1" height="1.0" fill="#c02828"/>
<rect x="406.4" y="311" width="1" height="1.0" fill="#c02828"/>
<rect x="409.0" y="311" width="1" height="1.0" fill="#c02828"/>
<rect x="411.6" y="311" width="1" height="1.0" fill="#c02828"/>
<rect x="414.2" y="311.0" width="1" height="1.0" fill="#c02828"/>
<rect x="416.9" y="309.8" width="1" height="2.2" fill="#c02828"/>
<rect x="419.5" y="309.4" width="1" height="2.6" fill="#c02828"/>
<rect x="422.1" y="309.8" width="1" height="2.2" fill="#c02828"/>
<rect x="424.8" y="311.0" width="1" height="1.0" fill="#c02828"/>
<rect x="427.4" y="311" width="1" height="1.0" fill="#c02828"/>
<rect x="430.0" y="311" width="1" height="1.0" fill="#c02828"/>
<rect x="432.6" y="311" width="1" height="1.0" fill="#c02828"/>
<rect x="435.2" y="311" width="1" height="1.0" fill="#c02828"/>
<rect x="437.9" y="311" width="1" height="1.0" fill="#c02828"/>
<rect x="440.5" y="311" width="1" height="1.0" fill="#c02828"/>
<rect x="443.1" y="311" width="1" height="1.0" fill="#c02828"/>
<rect x="445.8" y="311" width="1" height="1.0" fill="#c02828"/>
<rect x="448.4" y="311" width="1" height="1.2" fill="#c02828"/>
<rect x="451.0" y="311" width="1" height="1.9" fill="#c02828"/>
<rect x="453.6" y="311" width="1" height="2.3" fill="#c02828"/>
<rect x="456.2" y="311" width="1" height="2.5" fill="#c02828"/>
<rect x="458.9" y="311" width="1" height="2.5" fill="#c02828"/>
<rect x="461.5" y="311" width="1" height="2.3" fill="#c02828"/>
<rect x="464.1" y="311" width="1" height="1.8" fill="#c02828"/>
<rect x="466.8" y="311" width="1" height="1.2" fill="#c02828"/>
<rect x="469.4" y="311" width="1" height="1.0" fill="#c02828"/>
<rect x="472.0" y="311" width="1" height="1.0" fill="#c02828"/>
<rect x="474.6" y="311" width="1" height="1.0" fill="#c02828"/>
<rect x="477.2" y="311" width="1" height="1.0" fill="#c02828"/>
<rect x="479.9" y="311" width="1" height="1.0" fill="#c02828"/>
<rect x="482.5" y="311" width="1" height="1.0" fill="#c02828"/>
<rect x="485.1" y="311" width="1" height="1.0" fill="#c02828"/>
<rect x="487.8" y="311" width="1" height="1.0" fill="#c02828"/>
<rect x="490.4" y="311" width="1" height="1.0" fill="#c02828"/>
<rect x="493.0" y="311" width="1" height="1.0" fill="#c02828"/>
<rect x="495.6" y="311" width="1" height="2.4" fill="#c02828"/>
<rect x="498.2" y="311" width="1" height="3.5" fill="#c02828"/>
<rect x="500.9" y="311" width="1" height="4.1" fill="#c02828"/>
<rect x="503.5" y="311" width="1" height="4.4" fill="#c02828"/>
<rect x="506.1" y="311" width="1" height="4.3" fill="#c02828"/>
<rect x="508.8" y="311" width="1" height="3.8" fill="#c02828"/>
<rect x="511.4" y="311" width="1" height="2.8" fill="#c02828"/>
<rect x="514.0" y="311" width="1" height="1.4" fill="#c02828"/>
<rect x="516.6" y="311" width="1" height="1.0" fill="#c02828"/>
<rect x="519.2" y="311" width="1" height="1.0" fill="#c02828"/>
<rect x="521.9" y="311" width="1" height="1.0" fill="#c02828"/>
<rect x="524.5" y="311" width="1" height="1.0" fill="#c02828"/>
<rect x="527.1" y="311" width="1" height="1.0" fill="#c02828"/>
<rect x="529.8" y="311" width="1" height="1.0" fill="#c02828"/>
<rect x="532.4" y="311" width="1" height="1.0" fill="#c02828"/>
<rect x="535.0" y="311" width="1" height="1.0" fill="#c02828"/>
<rect x="537.6" y="311" width="1" height="1.0" fill="#c02828"/>
<rect x="540.2" y="311" width="1" height="1.0" fill="#c02828"/>
<rect x="542.9" y="311" width="1" height="1.0" fill="#c02828"/>
<rect x="545.5" y="311" width="1" height="1.0" fill="#c02828"/>
<rect x="548.1" y="311" width="1" height="1.0" fill="#c02828"/>
<rect x="550.8" y="311" width="1" height="1.0" fill="#c02828"/>
<rect x="553.4" y="311" width="1" height="1.0" fill="#c02828"/>
<rect x="556.0" y="311" width="1" height="1.0" fill="#c02828"/>
<rect x="558.6" y="311" width="1" height="1.0" fill="#c02828"/>
<rect x="561.2" y="311" width="1" height="1.0" fill="#c02828"/>
<rect x="563.9" y="311" width="1" height="1.0" fill="#c02828"/>
<rect x="566.5" y="311" width="1" height="1.0" fill="#c02828"/>
<rect x="569.1" y="311" width="1" height="1.0" fill="#c02828"/>
<rect x="571.8" y="311" width="1" height="1.0" fill="#c02828"/>
<rect x="574.4" y="308.1" width="1" height="3.9" fill="#c02828"/>
<rect x="577.0" y="305.4" width="1" height="6.6" fill="#c02828"/>
<rect x="579.6" y="304.4" width="1" height="7.6" fill="#c02828"/>
<rect x="582.2" y="305.0" width="1" height="7.0" fill="#c02828"/>
<rect x="584.9" y="307.2" width="1" height="4.8" fill="#c02828"/>
<rect x="587.5" y="311.0" width="1" height="1.0" fill="#c02828"/>
<rect x="590.1" y="311" width="1" height="1.0" fill="#c02828"/>
<rect x="592.8" y="311" width="1" height="1.4" fill="#c02828"/>
<rect x="595.4" y="311" width="1" height="2.2" fill="#c02828"/>
<rect x="598.0" y="311" width="1" height="2.5" fill="#c02828"/>
<rect x="600.6" y="311" width="1" height="2.2" fill="#c02828"/>
<rect x="603.2" y="311" width="1" height="1.4" fill="#c02828"/>
<rect x="605.9" y="311" width="1" height="1.0" fill="#c02828"/>
<rect x="608.5" y="311" width="1" height="1.0" fill="#c02828"/>
<rect x="611.1" y="311.0" width="1" height="1.0" fill="#c02828"/>
<rect x="613.8" y="310.6" width="1" height="1.4" fill="#c02828"/>
<rect x="616.4" y="310.5" width="1" height="1.5" fill="#c02828"/>
<rect x="619.0" y="310.7" width="1" height="1.3" fill="#c02828"/>
<rect x="621.6" y="311.0" width="1" height="1.0" fill="#c02828"/>
<rect x="624.2" y="311" width="1" height="1.0" fill="#c02828"/>
<rect x="626.9" y="311" width="1" height="1.0" fill="#c02828"/>
<rect x="629.5" y="311" width="1" height="1.0" fill="#c02828"/>
<rect x="632.1" y="311" width="1" height="1.0" fill="#c02828"/>
<rect x="634.8" y="311" width="1" height="1.0" fill="#c02828"/>
<rect x="637.4" y="311" width="1" height="1.0" fill="#c02828"/>
<rect x="640.0" y="311" width="1" height="1.0" fill="#c02828"/>
<rect x="642.6" y="311" width="1" height="1.0" fill="#c02828"/>
<rect x="645.2" y="311" width="1" height="1.0" fill="#c02828"/>
<rect x="647.9" y="311" width="1" height="1.0" fill="#c02828"/>
<rect x="650.5" y="311" width="1" height="1.0" fill="#c02828"/>
<rect x="653.1" y="311" width="1" height="1.0" fill="#c02828"/>
<rect x="655.8" y="311" width="1" height="1.0" fill="#c02828"/>
<rect x="658.4" y="311" width="1" height="1.0" fill="#c02828"/>
<rect x="661.0" y="311" width="1" height="1.3" fill="#c02828"/>
<rect x="663.6" y="311" width="1" height="2.6" fill="#c02828"/>
<rect x="666.2" y="311" width="1" height="3.1" fill="#c02828"/>
<rect x="668.9" y="311" width="1" height="3.1" fill="#c02828"/>
<rect x="671.5" y="311" width="1" height="2.5" fill="#c02828"/>
<rect x="674.1" y="311" width="1" height="1.3" fill="#c02828"/>
<rect x="676.8" y="311" width="1" height="1.0" fill="#c02828"/>
<rect x="679.4" y="311" width="1" height="1.0" fill="#c02828"/>
<rect x="682.0" y="311" width="1" height="1.0" fill="#c02828"/>
<rect x="684.6" y="311" width="1" height="1.0" fill="#c02828"/>
<rect x="687.2" y="311" width="1" height="2.0" fill="#c02828"/>
<rect x="689.9" y="311" width="1" height="3.0" fill="#c02828"/>
<rect x="692.5" y="311" width="1" height="3.6" fill="#c02828"/>
<rect x="695.1" y="311" width="1" height="3.8" fill="#c02828"/>
<rect x="697.8" y="311" width="1" height="3.6" fill="#c02828"/>
<rect x="700.4" y="311" width="1" height="2.9" fill="#c02828"/>
<rect x="703.0" y="311" width="1" height="1.9" fill="#c02828"/>
<rect x="705.6" y="311.0" width="1" height="1.0" fill="#c02828"/>
<rect x="708.2" y="310.8" width="1" height="1.2" fill="#c02828"/>
<rect x="710.9" y="310.3" width="1" height="1.7" fill="#c02828"/>
<rect x="713.5" y="310.0" width="1" height="2.0" fill="#c02828"/>
<rect x="716.1" y="310.1" width="1" height="1.9" fill="#c02828"/>
<rect x="718.8" y="310.4" width="1" height="1.6" fill="#c02828"/>
<rect x="721.4" y="311.0" width="1" height="1.0" fill="#c02828"/>
<polyline points="10.0,316.1 15.4,314.2 25.5,312.0 34.4,311.6 39.5,311.0 43.4,314.2 51.0,319.3 56.1,320.9 61.2,320.5 66.3,318.6 71.3,316.7 79.0,319.9 85.3,320.9 95.5,320.3 100.6,317.4 110.8,312.9 115.9,310.7 121.0,310.4 129.0,314.8 136.6,321.2 148.1,330.1 154.4,331.7 167.2,332.9 172.3,332.6 177.3,330.7 187.5,320.5 193.9,318.6 197.7,320.5 205.3,320.9 211.7,321.2 218.1,321.8 225.7,321.2 233.3,318.6 241.0,316.7 249.0,312.6 255.4,308.4 264.3,302.1 271.9,298.5 277.0,300.2 282.1,302.1 291.0,303.1 297.3,303.4 302.4,297.6 310.1,290.0 319.0,290.0 325.3,294.5 333.0,300.8 340.6,304.0 348.2,304.9 369.0,304.9 375.4,307.2 380.5,312.9 385.5,319.9 390.6,323.7 405.9,323.7 413.5,320.5 422.4,316.1 428.8,312.0 435.2,310.0 440.2,311.0 447.9,314.8 458.1,317.6 465.7,321.4 474.6,321.8 481.0,322.7 489.0,321.5 494.1,321.8 501.7,327.5 511.9,335.2 520.8,335.8 532.3,335.4 542.4,330.7 552.6,325.6 560.2,324.3 570.4,321.2 575.5,314.8 580.6,307.8 588.2,300.6 594.6,302.1 601.0,304.6 609.0,306.7 614.1,306.5 624.3,300.8 630.6,299.8 640.8,299.5 644.6,298.0 653.5,297.0 663.7,300.2 670.1,304.0 677.7,307.8 685.3,308.4 691.7,312.3 699.3,317.6 708.2,313.5 715.9,311.6 723.5,309.7" fill="none" stroke="#137a13" stroke-width="2.6" stroke-linejoin="round"/>
<polyline points="10.0,315.5 19.2,312.3 37.0,309.7 53.5,324.3 71.3,313.5 80.2,323.5 85.3,322.4 98.0,318.6 115.9,309.7 123.5,312.3 129.0,317.4 137.9,326.9 146.8,333.9 154.4,334.5 165.9,333.9 173.5,328.8 179.9,319.9 185.0,318.0 191.3,317.6 195.2,321.2 200.2,323.5 202.8,322.4 211.7,321.8 218.1,323.1 228.2,319.9 241.0,314.8 249.0,308.5 254.1,305.9 261.7,300.2 269.4,297.2 273.2,297.6 278.3,303.4 282.1,304.4 287.2,302.7 294.8,304.6 299.9,300.8 306.3,285.5 310.1,286.8 312.6,289.4 321.5,293.8 330.4,302.1 340.6,305.9 347.0,306.2 369.0,306.5 375.4,308.4 379.2,314.2 385.5,326.9 391.9,327.3 397.0,324.3 413.5,319.3 422.4,314.2 427.5,308.4 432.6,308.2 440.2,311.0 446.6,316.3 453.0,318.4 458.1,318.0 465.7,324.3 470.8,324.3 481.0,323.7 487.3,319.9 499.2,329.4 511.9,338.3 517.0,337.1 527.2,335.8 537.3,330.7 552.6,323.1 562.8,321.2 570.4,319.3 575.5,304.0 578.1,300.2 587.0,297.6 593.3,304.0 601.0,307.8 609.0,308.4 617.9,300.8 625.5,299.5 640.8,299.3 644.6,296.4 652.3,296.7 665.0,301.4 672.6,307.8 680.2,309.1 690.4,316.7 698.0,320.5 705.7,314.2 710.8,311.0 722.2,307.8" fill="none" stroke="#10108a" stroke-width="1" stroke-linejoin="round"/>
<polyline points="10.0,388.5 11.1,390.6 16.1,385.6 21.8,386.3 30.4,387.0 32.5,388.5 34.6,382.4 37.5,383.5 41.8,392.0 47.5,397.7 50.3,393.5 53.2,401.3 55.3,390.6 57.4,392.0 61.7,388.5 66.0,387.8 71.0,385.6 74.5,397.0 78.8,394.9 83.1,392.3 90.2,392.7 95.9,390.6 100.2,386.1 105.9,386.1 108.7,383.2 113.0,384.9 118.7,385.2 123.0,392.0 127.2,396.3 129.0,394.9 133.3,397.7 137.5,404.1 140.4,402.0 147.5,408.4 151.8,407.4 157.5,404.1 164.6,409.8 168.9,407.7 173.2,400.6 174.6,402.7 179.6,389.2 182.4,387.5 185.3,392.3 190.3,391.8 196.0,401.3 203.1,393.2 207.3,394.9 211.6,399.2 217.3,398.9 223.0,396.3 230.1,390.3 233.0,394.2 240.1,387.8 243.0,392.3 249.0,375.5 251.8,380.6 256.1,382.8 261.1,374.2 268.9,374.2 273.2,377.1 278.2,385.2 282.5,378.5 286.0,378.5 291.7,381.4 296.0,380.4 300.3,366.4 305.3,362.1 307.4,362.8 311.0,374.9 317.4,372.1 320.2,376.4 325.9,379.9 331.6,382.4 335.9,381.4 340.2,379.5 344.4,381.4 348.7,379.2 354.4,377.8 357.3,380.6 363.0,377.1 367.2,374.9 369.0,381.4 370.4,385.6 372.6,383.2 375.4,383.5 378.3,392.7 381.8,397.0 385.4,402.0 388.2,397.4 391.8,397.0 393.9,391.8 398.9,395.2 403.2,395.2 408.9,392.3 412.4,388.9 414.6,391.3 418.1,386.1 421.0,386.6 422.8,389.2 425.3,376.4 428.8,384.2 433.1,383.5 436.0,388.5 440.9,386.3 444.5,391.3 449.5,390.3 452.3,393.5 457.3,392.3 464.4,399.2 471.6,394.2 477.3,398.4 485.8,394.2 489.0,390.6 494.7,400.3 499.7,404.9 501.8,403.4 509.7,410.3 512.5,409.8 518.2,403.4 525.3,408.4 530.3,404.1 537.4,401.3 539.6,402.3 544.6,400.9 548.8,398.4 551.7,394.6 554.5,403.4 560.9,394.6 565.2,398.0 568.1,393.2 570.9,392.7 575.2,372.8 578.0,373.5 581.6,381.4 586.6,375.7 590.1,382.8 595.8,384.9 603.0,385.2 607.2,379.5 609.0,385.6 610.4,389.2 614.7,377.8 618.3,376.4 620.4,380.6 623.2,378.5 626.8,380.6 631.8,378.5 638.9,378.1 641.8,374.2 646.0,374.9 648.9,374.2 653.2,377.1 657.4,376.4 661.7,378.9 665.3,379.2 668.8,384.2 673.1,385.2 676.7,386.3 678.8,381.4 684.5,381.8 690.9,393.2 694.5,393.5 698.0,395.2 701.6,389.2 705.9,381.4 711.6,382.8 715.1,387.5 718.7,382.4 723.0,380.4" fill="none" stroke="#df8a2a" stroke-width="1" stroke-linejoin="round"/>
<rect x="10" y="285" width="36" height="11" fill="#fff"/>
<text x="11.5" y="293.3" font-size="9.5" fill="#10108a" textLength="32" lengthAdjust="spacingAndGlyphs" style='font-family:"Liberation Sans",sans-serif'>MACD</text>
<rect x="10" y="350" width="20" height="11" fill="#fff"/>
<text x="11.5" y="359.2" font-size="9.5" fill="#e08a20" textLength="18.5" lengthAdjust="spacingAndGlyphs" style='font-family:"Liberation Sans",sans-serif'>RSI</text>
<text x="933.5" y="51.8" font-size="9.8" fill="#2a2a2a" stroke="#2a2a2a" stroke-width="0.15" textLength="37.5" lengthAdjust="spacingAndGlyphs" style='font-family:"Liberation Sans",sans-serif'>1.0700</text>
<text x="933.5" y="81.8" font-size="9.8" fill="#2a2a2a" stroke="#2a2a2a" stroke-width="0.15" textLength="37.5" lengthAdjust="spacingAndGlyphs" style='font-family:"Liberation Sans",sans-serif'>1.0650</text>
<text x="933.5" y="111.8" font-size="9.8" fill="#2a2a2a" stroke="#2a2a2a" stroke-width="0.15" textLength="37.5" lengthAdjust="spacingAndGlyphs" style='font-family:"Liberation Sans",sans-serif'>1.0600</text>
<text x="933.5" y="141.8" font-size="9.8" fill="#2a2a2a" stroke="#2a2a2a" stroke-width="0.15" textLength="37.5" lengthAdjust="spacingAndGlyphs" style='font-family:"Liberation Sans",sans-serif'>1.0550</text>
<text x="933.5" y="171.8" font-size="9.8" fill="#2a2a2a" stroke="#2a2a2a" stroke-width="0.15" textLength="37.5" lengthAdjust="spacingAndGlyphs" style='font-family:"Liberation Sans",sans-serif'>1.0500</text>
<text x="933.5" y="202.8" font-size="9.8" fill="#2a2a2a" stroke="#2a2a2a" stroke-width="0.15" textLength="37.5" lengthAdjust="spacingAndGlyphs" style='font-family:"Liberation Sans",sans-serif'>1.0450</text>
<text x="933.5" y="232.8" font-size="9.8" fill="#2a2a2a" stroke="#2a2a2a" stroke-width="0.15" textLength="37.5" lengthAdjust="spacingAndGlyphs" style='font-family:"Liberation Sans",sans-serif'>1.0400</text>
<text x="933.5" y="262.8" font-size="9.8" fill="#2a2a2a" stroke="#2a2a2a" stroke-width="0.15" textLength="37.5" lengthAdjust="spacingAndGlyphs" style='font-family:"Liberation Sans",sans-serif'>1.0350</text>
<rect x="933" y="142" width="39" height="12" fill="#f0a000"/>
<text x="933.5" y="151.8" font-size="9.8" fill="#fffbe8" textLength="37.5" lengthAdjust="spacingAndGlyphs" style='font-family:"Liberation Sans",sans-serif'>1.0531</text>
<text x="933.5" y="316.8" font-size="9.8" fill="#2a2a2a" stroke="#2a2a2a" stroke-width="0.15" textLength="28.5" lengthAdjust="spacingAndGlyphs" style='font-family:"Liberation Sans",sans-serif'>-0.00</text>
<text x="933.5" y="390.8" font-size="9.8" fill="#2a2a2a" stroke="#2a2a2a" stroke-width="0.15" textLength="12.5" lengthAdjust="spacingAndGlyphs" style='font-family:"Liberation Sans",sans-serif'>50</text>
<text x="19.9" y="444" font-size="9.5" fill="#202020" textLength="5.8" lengthAdjust="spacingAndGlyphs" style='font-family:"Liberation Sans",sans-serif'>6</text>
<text x="26.3" y="444" font-size="9.5" fill="#959595" textLength="17" lengthAdjust="spacingAndGlyphs" style='font-family:"Liberation Sans",sans-serif'>/Вт</text>
<text x="83.9" y="444" font-size="9.5" fill="#202020" textLength="5.8" lengthAdjust="spacingAndGlyphs" style='font-family:"Liberation Sans",sans-serif'>7</text>
<text x="90.3" y="444" font-size="9.5" fill="#959595" textLength="17" lengthAdjust="spacingAndGlyphs" style='font-family:"Liberation Sans",sans-serif'>/Ср</text>
<text x="146.9" y="444" font-size="9.5" fill="#202020" textLength="5.8" lengthAdjust="spacingAndGlyphs" style='font-family:"Liberation Sans",sans-serif'>8</text>
<text x="153.3" y="444" font-size="9.5" fill="#959595" textLength="17" lengthAdjust="spacingAndGlyphs" style='font-family:"Liberation Sans",sans-serif'>/Чт</text>
<text x="209.9" y="444" font-size="9.5" fill="#202020" textLength="5.8" lengthAdjust="spacingAndGlyphs" style='font-family:"Liberation Sans",sans-serif'>9</text>
<text x="216.3" y="444" font-size="9.5" fill="#959595" textLength="17" lengthAdjust="spacingAndGlyphs" style='font-family:"Liberation Sans",sans-serif'>/Пт</text>
<text x="267.5" y="444" font-size="9.5" fill="#202020" textLength="12.2" lengthAdjust="spacingAndGlyphs" style='font-family:"Liberation Sans",sans-serif'>12</text>
<text x="280.3" y="444" font-size="9.5" fill="#959595" textLength="17" lengthAdjust="spacingAndGlyphs" style='font-family:"Liberation Sans",sans-serif'>/Пн</text>
<text x="322.5" y="444" font-size="9.5" fill="#202020" textLength="12.2" lengthAdjust="spacingAndGlyphs" style='font-family:"Liberation Sans",sans-serif'>13</text>
<text x="335.3" y="444" font-size="9.5" fill="#959595" textLength="17" lengthAdjust="spacingAndGlyphs" style='font-family:"Liberation Sans",sans-serif'>/Вт</text>
<text x="386.5" y="444" font-size="9.5" fill="#202020" textLength="12.2" lengthAdjust="spacingAndGlyphs" style='font-family:"Liberation Sans",sans-serif'>14</text>
<text x="399.3" y="444" font-size="9.5" fill="#959595" textLength="17" lengthAdjust="spacingAndGlyphs" style='font-family:"Liberation Sans",sans-serif'>/Ср</text>
<text x="449.5" y="444" font-size="9.5" fill="#202020" textLength="12.2" lengthAdjust="spacingAndGlyphs" style='font-family:"Liberation Sans",sans-serif'>15</text>
<text x="462.3" y="444" font-size="9.5" fill="#959595" textLength="17" lengthAdjust="spacingAndGlyphs" style='font-family:"Liberation Sans",sans-serif'>/Чт</text>
<text x="512.5" y="444" font-size="9.5" fill="#202020" textLength="12.2" lengthAdjust="spacingAndGlyphs" style='font-family:"Liberation Sans",sans-serif'>16</text>
<text x="525.3" y="444" font-size="9.5" fill="#959595" textLength="17" lengthAdjust="spacingAndGlyphs" style='font-family:"Liberation Sans",sans-serif'>/Пт</text>
<text x="576.5" y="444" font-size="9.5" fill="#202020" textLength="12.2" lengthAdjust="spacingAndGlyphs" style='font-family:"Liberation Sans",sans-serif'>19</text>
<text x="589.3" y="444" font-size="9.5" fill="#959595" textLength="17" lengthAdjust="spacingAndGlyphs" style='font-family:"Liberation Sans",sans-serif'>/Пн</text>
<text x="631.5" y="444" font-size="9.5" fill="#202020" textLength="12.2" lengthAdjust="spacingAndGlyphs" style='font-family:"Liberation Sans",sans-serif'>20</text>
<text x="644.3" y="444" font-size="9.5" fill="#959595" textLength="17" lengthAdjust="spacingAndGlyphs" style='font-family:"Liberation Sans",sans-serif'>/Вт</text>
<text x="694.5" y="444" font-size="9.5" fill="#202020" textLength="12.2" lengthAdjust="spacingAndGlyphs" style='font-family:"Liberation Sans",sans-serif'>21</text>
<text x="707.3" y="444" font-size="9.5" fill="#959595" textLength="17" lengthAdjust="spacingAndGlyphs" style='font-family:"Liberation Sans",sans-serif'>/Ср</text>
<text x="758.5" y="444" font-size="9.5" fill="#202020" textLength="12.2" lengthAdjust="spacingAndGlyphs" style='font-family:"Liberation Sans",sans-serif'>22</text>
<text x="771.3" y="444" font-size="9.5" fill="#959595" textLength="17" lengthAdjust="spacingAndGlyphs" style='font-family:"Liberation Sans",sans-serif'>/Чт</text>
<text x="821.5" y="444" font-size="9.5" fill="#202020" textLength="12.2" lengthAdjust="spacingAndGlyphs" style='font-family:"Liberation Sans",sans-serif'>23</text>
<text x="834.3" y="444" font-size="9.5" fill="#959595" textLength="17" lengthAdjust="spacingAndGlyphs" style='font-family:"Liberation Sans",sans-serif'>/Пт</text>
<text x="884.5" y="444" font-size="9.5" fill="#202020" textLength="12.2" lengthAdjust="spacingAndGlyphs" style='font-family:"Liberation Sans",sans-serif'>24</text>
<text x="897.3" y="444" font-size="9.5" fill="#959595" textLength="17" lengthAdjust="spacingAndGlyphs" style='font-family:"Liberation Sans",sans-serif'>/Сб</text>
<rect x="10" y="416" width="70" height="16" fill="#81a0bf"/>
<text x="16.5" y="427.8" font-size="9.4" fill="#ffffff" textLength="57.5" lengthAdjust="spacingAndGlyphs" style='font-family:"Liberation Sans",sans-serif'>Июль 2010</text>
<text x="8" y="16" font-size="11" fill="#000000" textLength="42" lengthAdjust="spacingAndGlyphs" style='font-family:"Liberation Sans",sans-serif'>График</text>
<text x="54.5" y="16" font-size="11" fill="#000000" textLength="24.5" lengthAdjust="spacingAndGlyphs" style='font-family:"Liberation Sans",sans-serif'>USD</text>
<text x="82.5" y="16" font-size="11" fill="#000000" textLength="28.5" lengthAdjust="spacingAndGlyphs" style='font-family:"Liberation Sans",sans-serif'>/CHF</text>
<text x="119.5" y="16" font-size="11" fill="#000000" textLength="24.5" lengthAdjust="spacingAndGlyphs" style='font-family:"Liberation Sans",sans-serif'>ЧАС</text>
<defs><linearGradient id="gb" x1="0" y1="0" x2="1" y2="1"><stop offset="0" stop-color="#8eb2f2"/><stop offset="0.45" stop-color="#3f72dc"/><stop offset="1" stop-color="#0c3cb4"/></linearGradient><linearGradient id="gr" x1="0" y1="0" x2="1" y2="1"><stop offset="0" stop-color="#f09a80"/><stop offset="0.45" stop-color="#dc5a32"/><stop offset="1" stop-color="#b83010"/></linearGradient></defs>
<rect x="900" y="5" width="14" height="13" rx="3" fill="#eef3fb"/>
<rect x="901.5" y="6.5" width="10.5" height="10" rx="2" fill="url(#gb)" stroke="#1a3c9c" stroke-width="1"/>
<path d="M904.5 9.2 Q904.8 7.6 907 7.6 Q909.6 7.6 909.6 9.6 Q909.6 11 907.8 11.6 L907.8 12.6" fill="none" stroke="#fff" stroke-width="2"/>
<rect x="905.6" y="13.8" width="2.6" height="1.8" fill="#fff"/>
<rect x="916" y="5" width="14" height="13" rx="3" fill="#eef3fb"/>
<rect x="917.5" y="6.5" width="10.5" height="10" rx="2" fill="url(#gb)" stroke="#1a3c9c" stroke-width="1"/>
<rect x="919.5" y="8" width="3" height="7" fill="#fff"/><rect x="923.5" y="8" width="3" height="7" fill="#fff"/>
<rect x="932" y="5" width="14" height="13" rx="3" fill="#eef3fb"/>
<rect x="933.5" y="6.5" width="10.5" height="10" rx="2" fill="url(#gb)" stroke="#1a3c9c" stroke-width="1"/>
<rect x="935" y="8" width="8" height="2.6" fill="#fff"/><rect x="935" y="12" width="8" height="2.6" fill="#fff"/>
<rect x="948" y="5" width="14" height="13" rx="3" fill="#eef3fb"/>
<rect x="949.5" y="6.5" width="10.5" height="10" rx="2" fill="url(#gb)" stroke="#1a3c9c" stroke-width="1"/>
<rect x="951.6" y="8.3" width="6.6" height="6.4" fill="none" stroke="#fff" stroke-width="1.6"/>
<rect x="964" y="5" width="14" height="13" rx="3" fill="#eef3fb"/>
<rect x="965.5" y="6.5" width="10.5" height="10" rx="2" fill="url(#gr)" stroke="#a03a20" stroke-width="1"/>
<path d="M968 8.3 L974 14.7 M974 8.3 L968 14.7" stroke="#fff" stroke-width="1.9"/>
</svg></body></html>
